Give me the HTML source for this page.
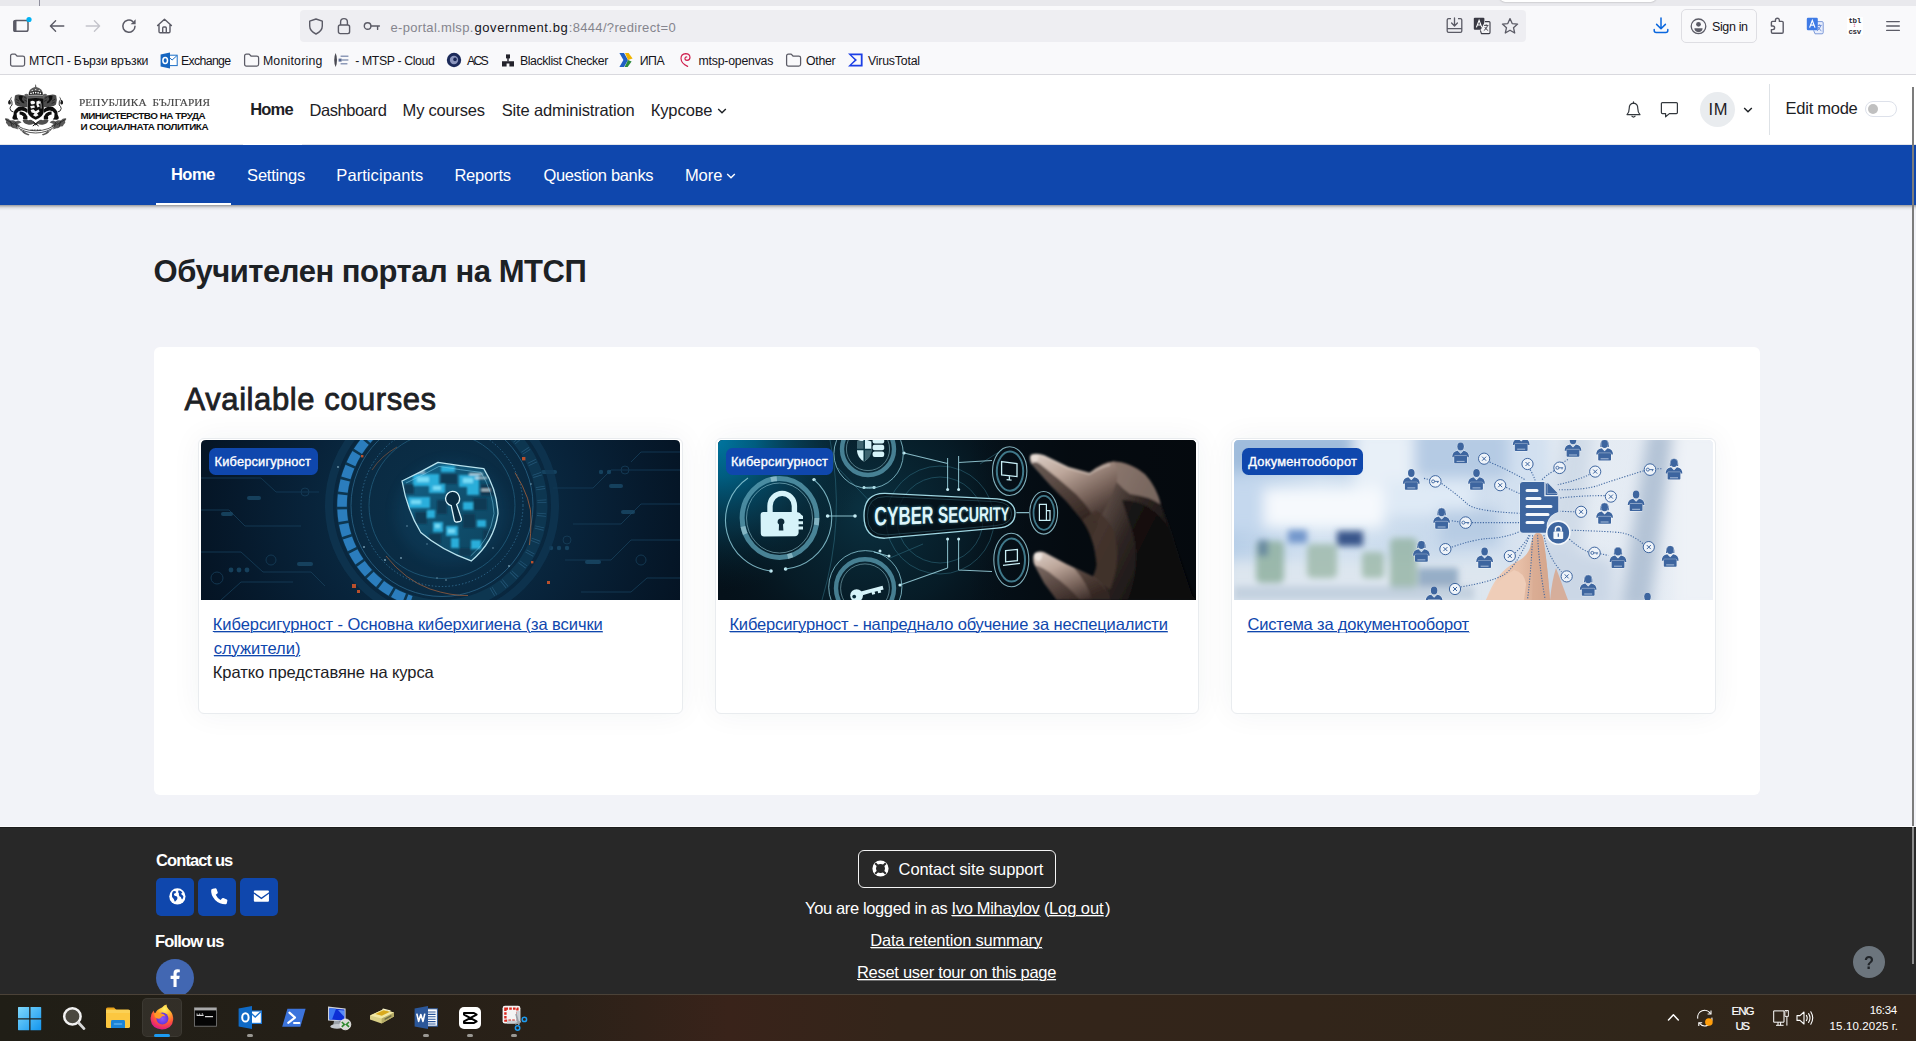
<!DOCTYPE html>
<html lang="bg"><head><meta charset="utf-8"><title>Home | Обучителен портал на МТСП</title>
<style>
html,body{margin:0;padding:0}
body{width:1916px;height:1041px;overflow:hidden;position:relative;background:#f2f3f8;font-family:"Liberation Sans",sans-serif}
.t{position:absolute;white-space:pre;display:block}
.a{position:absolute;display:block}
svg{position:absolute;overflow:visible}
u{text-decoration:underline;text-decoration-thickness:1px;text-underline-offset:2px}

</style></head>
<body>

<!-- ===== Firefox chrome ===== -->
<div class="a" style="left:0;top:0;width:1916px;height:75px;background:#f9f9fb"></div>
<div class="a" style="left:0;top:0;width:1916px;height:6px;background:#e9e9ed"></div>
<div class="a" style="left:39px;top:0;width:1px;height:6px;background:#8f8f9d"></div>
<div class="a" style="left:1500px;top:-6px;width:156px;height:8px;background:#fff;border-radius:0 0 5px 5px;box-shadow:0 0 2px rgba(0,0,0,.35)"></div>
<div class="a" style="left:0;top:74px;width:1916px;height:1px;background:#d9d9de"></div>
<!-- urlbar -->
<div class="a" style="left:300px;top:10px;width:1226px;height:32px;background:#eeeef2;border-radius:4px"></div>
<!-- left toolbar icons -->
<svg style="left:12px;top:16px" width="20" height="18" viewBox="0 0 20 18"><rect x="2" y="4.6" width="14" height="10.6" rx="1.8" fill="none" stroke="#5b5b66" stroke-width="1.5"/><rect x="1.3" y="4" width="3.2" height="12" rx="1.5" fill="#5b5b66"/><circle cx="17" cy="3.5" r="2.6" fill="#00b3f4"/></svg>
<svg style="left:49px;top:19px" width="16" height="14" viewBox="0 0 16 14"><path d="M6.6 1.8 L1.4 7 L6.6 12.2 M1.8 7 H14.8" fill="none" stroke="#5b5b66" stroke-width="1.35" stroke-linecap="round" stroke-linejoin="round"/></svg>
<svg style="left:85px;top:19px" width="16" height="14" viewBox="0 0 16 14"><path d="M9.4 1.8 L14.6 7 L9.4 12.2 M14.2 7 H1.2" fill="none" stroke="#c4c4cb" stroke-width="1.35" stroke-linecap="round" stroke-linejoin="round"/></svg>
<svg style="left:121px;top:18px" width="16" height="16" viewBox="0 0 16 16"><path d="M14 8.2 A6.1 6.1 0 1 1 11.6 3.3" fill="none" stroke="#5b5b66" stroke-width="1.5" stroke-linecap="round"/><path d="M14.6 1.2 V6.2 H9.6 Z" fill="#5b5b66"/></svg>
<svg style="left:156px;top:18px" width="17" height="16" viewBox="0 0 17 16"><path d="M1.6 7.6 L8.5 1.2 L15.4 7.6 M3 6.6 V13.6 Q3 14.8 4.2 14.8 H12.8 Q14 14.8 14 13.6 V6.6 M6.7 14.6 V10 Q6.7 9 7.7 9 H9.3 Q10.3 9 10.3 10 V14.6" fill="none" stroke="#5b5b66" stroke-width="1.4" stroke-linecap="round" stroke-linejoin="round"/></svg>
<!-- urlbar icons -->
<svg style="left:308px;top:18px" width="16" height="17" viewBox="0 0 16 17"><path d="M8 1 L14.3 3.2 V8 Q14.3 13 8 16 Q1.7 13 1.7 8 V3.2 Z" fill="none" stroke="#5b5b66" stroke-width="1.4" stroke-linejoin="round"/></svg>
<svg style="left:337px;top:17px" width="14" height="18" viewBox="0 0 14 18"><rect x="1.4" y="8" width="11.2" height="8.6" rx="1.8" fill="none" stroke="#5b5b66" stroke-width="1.4"/><path d="M3.6 8 V5 A3.4 3.4 0 0 1 10.4 5 V8" fill="none" stroke="#5b5b66" stroke-width="1.4"/></svg>
<svg style="left:363px;top:21px" width="18" height="11" viewBox="0 0 18 11"><circle cx="4.6" cy="5" r="3.3" fill="none" stroke="#5b5b66" stroke-width="1.4"/><path d="M8 5 H16.4 M14.6 5 V8.4" fill="none" stroke="#5b5b66" stroke-width="1.4" stroke-linecap="round"/></svg>
<span id="t0" class="t" style="left:390.50px;top:19px;font:400 13.0px/17px 'Liberation Sans',sans-serif;color:#85858e;letter-spacing:0.313px;">e-portal.mlsp.</span>
<span id="t1" class="t" style="left:474.60px;top:19px;font:400 13.0px/17px 'Liberation Sans',sans-serif;color:#15141a;letter-spacing:0.526px;">government.bg</span>
<span id="t2" class="t" style="left:568.70px;top:19px;font:400 13.0px/17px 'Liberation Sans',sans-serif;color:#85858e;letter-spacing:0.337px;">:8444/?redirect=0</span>
<!-- urlbar right icons -->
<svg style="left:1446px;top:17px" width="17" height="17" viewBox="0 0 17 17"><path d="M5 1.6 H2.6 Q1.2 1.6 1.2 3 V14 Q1.2 15.4 2.6 15.4 H14.4 Q15.8 15.4 15.8 14 V3 Q15.8 1.6 14.4 1.6 H12 M1.4 11.6 H15.6" fill="none" stroke="#5b5b66" stroke-width="1.3"/><path d="M8.5 1 V8.6 M5.6 6 L8.5 9 L11.4 6" fill="none" stroke="#5b5b66" stroke-width="1.3" stroke-linecap="round" stroke-linejoin="round"/></svg>
<svg style="left:1473px;top:17px" width="18" height="18" viewBox="0 0 18 18"><rect x="0.8" y="0.8" width="10.6" height="12" rx="1" fill="#3a3a44"/><path d="M3.4 10.4 L6.1 3.2 L8.8 10.4 M4.4 8 H7.8" fill="none" stroke="#fff" stroke-width="1.1"/><path d="M12 4.6 H16 Q17 4.6 17 5.6 V15.6 Q17 16.6 16 16.6 H8.4 L7.4 13.4" fill="#f4f4f6" stroke="#3a3a44" stroke-width="1.1" stroke-linejoin="round"/><path d="M11 8.4 H15.4 M13.2 7.4 V8.4 M14.6 8.6 Q13.6 12 10.8 13.6 M11.8 10 Q13 12.6 15.2 13.6" fill="none" stroke="#3a3a44" stroke-width="0.9"/></svg>
<svg style="left:1501px;top:17px" width="18" height="18" viewBox="0 0 18 18"><path d="M9 1.6 L11.2 6.6 L16.6 7.1 L12.5 10.7 L13.7 16 L9 13.2 L4.3 16 L5.5 10.7 L1.4 7.1 L6.8 6.6 Z" fill="none" stroke="#5b5b66" stroke-width="1.3" stroke-linejoin="round"/></svg>
<!-- right of urlbar -->
<svg style="left:1653px;top:17px" width="16" height="17" viewBox="0 0 16 17"><path d="M8 1 V11.4 M3.6 7.4 L8 11.8 L12.4 7.4 M1.2 12.6 V13.6 Q1.2 15.6 3.2 15.6 H12.8 Q14.8 15.6 14.8 13.6 V12.6" fill="none" stroke="#0a67de" stroke-width="1.5" stroke-linecap="round" stroke-linejoin="round"/></svg>
<div class="a" style="left:1681px;top:9px;width:74px;height:32px;border:1px solid #dedee3;border-radius:5px;background:#f9f9fb"></div>
<svg style="left:1690px;top:18px" width="17" height="17" viewBox="0 0 17 17"><circle cx="8.5" cy="8.3" r="7.3" fill="none" stroke="#5b5b66" stroke-width="1.3"/><circle cx="8.5" cy="6.3" r="2.4" fill="#5b5b66"/><path d="M4.4 10.2 H12.6 Q12.6 13.6 8.5 14.2 Q4.4 13.6 4.4 10.2 Z" fill="#5b5b66"/></svg>
<span id="t3" class="t" style="left:1711.90px;top:18px;font:400 12.5px/18px 'Liberation Sans',sans-serif;color:#15141a;letter-spacing:-0.345px;">Sign in</span>
<svg style="left:1769px;top:17px" width="17" height="18" viewBox="0 0 17 18"><path d="M6.4 4.4 V3.4 Q6.4 1.3 8.4 1.3 Q10.4 1.3 10.4 3.4 V4.4 H13 Q14.2 4.4 14.2 5.6 V15 Q14.2 16.2 13 16.2 H3.6 Q2.4 16.2 2.4 15 V12.6 H3.8 Q5.6 12.6 5.6 10.8 Q5.6 9 3.8 9 H2.4 V5.6 Q2.4 4.4 3.6 4.4 Z" fill="none" stroke="#5b5b66" stroke-width="1.4" stroke-linejoin="round"/></svg>
<svg style="left:1806px;top:17px" width="18" height="18" viewBox="0 0 18 18"><path d="M9.6 4.6 H16 Q17.2 4.6 17.2 5.8 V15.6 Q17.2 16.8 16 16.8 H9 L7.6 13.4" fill="#e8eefc" stroke="#6f8fd4" stroke-width="0.9"/><rect x="0.8" y="0.8" width="11" height="12.4" rx="1.2" fill="#3f7be6"/><path d="M3.6 10.6 L6.3 3.4 L9 10.6 M4.6 8.2 H8" fill="none" stroke="#fff" stroke-width="1.2"/><path d="M11.4 8.4 H15.6 M13.4 7.4 V8.4 M14.8 8.6 Q13.8 12 11 13.8 M12 10 Q13.2 12.6 15.4 13.8" fill="none" stroke="#5a7fd0" stroke-width="0.9"/></svg>
<div class="a" style="left:1847px;top:17px;width:16px;height:18px;background:#fff"></div>
<span class="t" style="left:1848.5px;top:16.5px;font:700 7.5px/8px 'Liberation Mono',monospace;color:#2b2a33;letter-spacing:-0.4px">tbl</span>
<span class="t" style="left:1853px;top:22px;font:700 6px/7px 'Liberation Sans',sans-serif;color:#e22d6b">↕</span>
<span class="t" style="left:1848.5px;top:27.5px;font:700 7.5px/8px 'Liberation Mono',monospace;color:#2b2a33;letter-spacing:-0.4px">csv</span>
<svg style="left:1886px;top:20px" width="14" height="12" viewBox="0 0 14 12"><path d="M0.7 1.6 H13.3 M0.7 6 H13.3 M0.7 10.4 H13.3" stroke="#5b5b66" stroke-width="1.4" stroke-linecap="round"/></svg>


<svg style="left:9px;top:52.5px" width="17" height="15" viewBox="0 0 17 15"><path d="M1.6 3 Q1.6 1.1 3.4 1.1 H6.2 L8 3 H13.8 Q15.6 3 15.6 4.8 V11.2 Q15.6 13 13.8 13 H3.4 Q1.6 13 1.6 11.2 Z" fill="none" stroke="#5b5b66" stroke-width="1.25" stroke-linejoin="round"/></svg>
<span id="t4" class="t" style="left:29.10px;top:52px;font:400 12.3px/18px 'Liberation Sans',sans-serif;color:#15141a;letter-spacing:-0.242px;">МТСП - Бързи връзки</span>
<svg style="left:160px;top:51.7px" width="18" height="17" viewBox="0 0 18 17"><rect x="7" y="3.2" width="10.2" height="10.4" fill="#fff" stroke="#1b6ec6" stroke-width="1"/><path d="M7.4 3.8 L12.1 8 L16.8 3.8" fill="none" stroke="#1b6ec6" stroke-width="1"/><path d="M0.6 2.4 L10 0.6 V16.4 L0.6 14.6 Z" fill="#1565c0"/><ellipse cx="5.2" cy="8.5" rx="2.3" ry="3" fill="none" stroke="#fff" stroke-width="1.5"/></svg>
<span id="t5" class="t" style="left:180.90px;top:52px;font:400 12.3px/18px 'Liberation Sans',sans-serif;color:#15141a;letter-spacing:-0.636px;">Exchange</span>
<svg style="left:243px;top:52.5px" width="17" height="15" viewBox="0 0 17 15"><path d="M1.6 3 Q1.6 1.1 3.4 1.1 H6.2 L8 3 H13.8 Q15.6 3 15.6 4.8 V11.2 Q15.6 13 13.8 13 H3.4 Q1.6 13 1.6 11.2 Z" fill="none" stroke="#5b5b66" stroke-width="1.25" stroke-linejoin="round"/></svg>
<span id="t6" class="t" style="left:262.90px;top:52px;font:400 12.3px/18px 'Liberation Sans',sans-serif;color:#15141a;letter-spacing:0.225px;">Monitoring</span>
<svg style="left:333px;top:52px" width="17" height="16" viewBox="0 0 17 16"><path d="M2.6 1 Q4 4 4 8 Q4 12 2.6 15 Q1.2 12 1.2 8 Q1.2 4 2.6 1 Z" fill="#4a4a52"/><path d="M7.6 4.2 H15.4 M8.6 8 H15.4 M7.6 11.8 H14.4" stroke="#8d9ab8" stroke-width="1.5"/><rect x="5.6" y="6.6" width="3" height="3" fill="#5a6a92"/></svg>
<span id="t7" class="t" style="left:355.20px;top:52px;font:400 12.3px/18px 'Liberation Sans',sans-serif;color:#15141a;letter-spacing:-0.376px;">- MTSP - Cloud</span>
<svg style="left:446px;top:52px" width="16" height="16" viewBox="0 0 16 16"><circle cx="8" cy="8" r="7.2" fill="#1c2a5a"/><circle cx="8" cy="8" r="4.2" fill="#8c96bd"/><circle cx="9" cy="7.4" r="1.8" fill="#1c2a5a"/></svg>
<span id="t8" class="t" style="left:467.10px;top:52px;font:400 12.3px/18px 'Liberation Sans',sans-serif;color:#15141a;letter-spacing:-1.841px;">ACS</span>
<svg style="left:501px;top:54px" width="14" height="13" viewBox="0 0 14 13"><rect x="5" y="0.4" width="4" height="4" fill="#23222b"/><path d="M7 4 V7.4" stroke="#23222b" stroke-width="1.4"/><path d="M1 7.2 H13 V12.4 H8.4 V9.4 H5.6 V12.4 H1 Z" fill="#23222b"/></svg>
<span id="t9" class="t" style="left:519.90px;top:52px;font:400 12.3px/18px 'Liberation Sans',sans-serif;color:#15141a;letter-spacing:-0.369px;">Blacklist Checker</span>
<svg style="left:618px;top:52px" width="16" height="16" viewBox="0 0 16 16"><path d="M1.4 1 H6 L10 8 L6 15 H1.4 L5.4 8 Z" fill="#1f5fc4"/><path d="M7 1 H10.6 L14.6 6.4 L10 8 Z" fill="#f0b400"/><path d="M10 8 L13.6 9.6 L9.6 15 H6.6 Z" fill="#2c8a3c"/></svg>
<span id="t10" class="t" style="left:639.80px;top:52px;font:400 12.3px/18px 'Liberation Sans',sans-serif;color:#15141a;letter-spacing:-0.538px;">ИПА</span>
<svg style="left:678px;top:52px" width="15" height="16" viewBox="0 0 15 16"><path d="M9.6 14.4 Q3.2 11.6 3 6.6 Q3 2 7.6 1.6 Q11.6 1.6 12 5.2 Q12 8.2 9 8.4 Q6.8 8.2 7 6.2 Q7.4 4.8 8.8 5" fill="none" stroke="#d0214f" stroke-width="1.2" stroke-linecap="round"/></svg>
<span id="t11" class="t" style="left:698.60px;top:52px;font:400 12.3px/18px 'Liberation Sans',sans-serif;color:#15141a;letter-spacing:-0.226px;">mtsp-openvas</span>
<svg style="left:785px;top:52.5px" width="17" height="15" viewBox="0 0 17 15"><path d="M1.6 3 Q1.6 1.1 3.4 1.1 H6.2 L8 3 H13.8 Q15.6 3 15.6 4.8 V11.2 Q15.6 13 13.8 13 H3.4 Q1.6 13 1.6 11.2 Z" fill="none" stroke="#5b5b66" stroke-width="1.25" stroke-linejoin="round"/></svg>
<span id="t12" class="t" style="left:805.90px;top:52px;font:400 12.3px/18px 'Liberation Sans',sans-serif;color:#15141a;letter-spacing:-0.240px;">Other</span>
<svg style="left:847px;top:52px" width="17" height="16" viewBox="0 0 17 16"><path d="M1 1.4 H15.6 V14.6 H1 L7.6 8 Z M4.6 3.2 L10 8 L4.6 12.8 H13.8 V3.2 Z" fill="#1c3fe6" fill-rule="evenodd"/></svg>
<span id="t13" class="t" style="left:867.90px;top:52px;font:400 12.3px/18px 'Liberation Sans',sans-serif;color:#15141a;letter-spacing:-0.182px;">VirusTotal</span>


<!-- ===== Moodle page ===== -->
<div class="a" style="left:0;top:75px;width:1916px;height:70px;background:#fff"></div>
<div class="a" style="left:0;top:144px;width:1916px;height:1px;background:#e4e6ea"></div>
<div class="a" style="left:243px;top:144px;width:59px;height:1px;background:#fff"></div>
<div class="a" style="left:0;top:145px;width:1916px;height:60px;background:#0f47ad"></div>
<div class="a" style="left:0;top:205px;width:1916px;height:6px;background:linear-gradient(to bottom,rgba(0,0,0,.36) 0%,rgba(0,0,0,.27) 16%,rgba(0,0,0,.15) 33%,rgba(0,0,0,.08) 50%,rgba(0,0,0,.035) 67%,rgba(0,0,0,.012) 84%,rgba(0,0,0,0) 100%)"></div>
<div class="a" style="left:156px;top:203px;width:75px;height:2px;background:#fff"></div>


<svg style="left:2px;top:80px" width="70" height="60" viewBox="0 0 70 60">
 <defs><filter id="cb" x="-5%" y="-5%" width="110%" height="110%"><feGaussianBlur stdDeviation="0.32"/></filter></defs>
 <g filter="url(#cb)">
  <!-- crown -->
  <path d="M33.7 4 L34.2 5.8 L33.2 5.8 Z M33.2 5.6 H34.2 V7 H33.2 Z" fill="#444"/>
  <path d="M26.4 15.6 Q26 8.4 33.7 6.8 Q41.4 8.4 41 15.6 Z" fill="#5a5a5a"/>
  <path d="M27.2 12.2 Q33.7 10.2 40.2 12.2 L40.4 15 Q33.7 13.2 27 15 Z" fill="#1c1c1c"/>
  <g fill="#fff"><circle cx="29" cy="13.3" r="0.85"/><circle cx="31.3" cy="12.8" r="0.85"/><circle cx="33.7" cy="12.6" r="0.85"/><circle cx="36.1" cy="12.8" r="0.85"/><circle cx="38.4" cy="13.3" r="0.85"/><circle cx="30.2" cy="10.4" r="0.6"/><circle cx="33.7" cy="9.6" r="0.6"/><circle cx="37.2" cy="10.4" r="0.6"/></g>
  <path d="M22.4 14.6 Q24 13 26.4 14.4 L26.6 16 H40.8 L41 14.4 Q43.4 13 45 14.6 Q44.4 17.6 42 18.8 H25.4 Q23 17.6 22.4 14.6 Z" fill="#666"/>
  <path d="M26.4 15.8 H41 V17.4 H26.4 Z" fill="#555"/>
  <g>
  <path d="M13 15.4 Q16 13.6 19.6 15 Q23 14.8 25.2 17.4 L25.4 27.2 Q22 27.6 19.4 26.4 Q15.4 26.8 13.2 24.4 Q11.6 20 13 15.4 Z" fill="#4c4c4c"/>
  <path d="M16.6 16 Q19 15 21 16.4 Q19.4 18.4 20.6 20.6 Q22.6 21.6 22.4 23.6 Q19.6 23 18.6 21 Q16.4 19.6 16.6 16 Z" fill="#111"/>
  <path d="M14 19 L17 21 M14.4 22 L17.6 23.6 M21.6 16.6 L24.4 18.4 M22.4 20 L25 21.4" stroke="#222" stroke-width="0.9" fill="none"/>
  <path d="M19 26.4 Q23.6 26.6 25.4 29.6 L25.4 33 Q22.6 30.6 19.6 30.4 Q16 30.6 14.6 33.4 L15 37.4 L16.4 39.4 L12.4 39.8 Q10 39.4 10.4 37.4 L11.6 34.6 Q11.6 30.4 14.4 28.4 Q16 26.6 19 26.4 Z" fill="#0d0d0d"/>
  <path d="M17.6 31.6 Q21 31.4 23.4 33.6 L25.4 36.4 L25.4 39.4 L21.4 39.6 Q20.4 37.6 21.4 36.4 Q19.6 34.4 17.6 34.4 Z" fill="#0d0d0d"/>
  <path d="M11.6 32 Q8.4 31.6 8 28.6 Q8.2 26.4 10 25 Q10.6 21.4 8.6 19.4" fill="none" stroke="#1a1a1a" stroke-width="0.9"/>
  <path d="M7.2 20 Q5.6 21.6 6.2 23.6 Q7 25 8.2 24.4 Q9.4 22.4 8.2 20.4 Q7.8 19.6 7.2 20 Z" fill="#1a1a1a"/>
  <path d="M8.8 19.4 Q8.2 17.6 9.8 17.2" fill="none" stroke="#333" stroke-width="0.7"/>
 </g><g transform="translate(67.2 0) scale(-1 1)">
  <path d="M13 15.4 Q16 13.6 19.6 15 Q23 14.8 25.2 17.4 L25.4 27.2 Q22 27.6 19.4 26.4 Q15.4 26.8 13.2 24.4 Q11.6 20 13 15.4 Z" fill="#4c4c4c"/>
  <path d="M16.6 16 Q19 15 21 16.4 Q19.4 18.4 20.6 20.6 Q22.6 21.6 22.4 23.6 Q19.6 23 18.6 21 Q16.4 19.6 16.6 16 Z" fill="#111"/>
  <path d="M14 19 L17 21 M14.4 22 L17.6 23.6 M21.6 16.6 L24.4 18.4 M22.4 20 L25 21.4" stroke="#222" stroke-width="0.9" fill="none"/>
  <path d="M19 26.4 Q23.6 26.6 25.4 29.6 L25.4 33 Q22.6 30.6 19.6 30.4 Q16 30.6 14.6 33.4 L15 37.4 L16.4 39.4 L12.4 39.8 Q10 39.4 10.4 37.4 L11.6 34.6 Q11.6 30.4 14.4 28.4 Q16 26.6 19 26.4 Z" fill="#0d0d0d"/>
  <path d="M17.6 31.6 Q21 31.4 23.4 33.6 L25.4 36.4 L25.4 39.4 L21.4 39.6 Q20.4 37.6 21.4 36.4 Q19.6 34.4 17.6 34.4 Z" fill="#0d0d0d"/>
  <path d="M11.6 32 Q8.4 31.6 8 28.6 Q8.2 26.4 10 25 Q10.6 21.4 8.6 19.4" fill="none" stroke="#1a1a1a" stroke-width="0.9"/>
  <path d="M7.2 20 Q5.6 21.6 6.2 23.6 Q7 25 8.2 24.4 Q9.4 22.4 8.2 20.4 Q7.8 19.6 7.2 20 Z" fill="#1a1a1a"/>
  <path d="M8.8 19.4 Q8.2 17.6 9.8 17.2" fill="none" stroke="#333" stroke-width="0.7"/>
 </g>
  <!-- shield -->
  <path d="M25.6 18.6 Q33.7 17.4 41.8 18.6 L41.8 31 Q41.6 36.6 33.7 39.8 Q25.8 36.6 25.6 31 Z" fill="#0c0c0c"/>
  <path d="M28.4 21.4 Q30.4 20 32.4 21.2 Q33.8 22.6 32.4 24 L29.6 24.4 Q28.2 23.4 28.4 21.4 Z M28.2 26 L32.2 25.4 L33 27.4 L29 28.4 Z M28.6 30 L31.4 29.2 L33.6 31.2 L36.6 29.4 L37.6 31.4 L35 33.6 L36.6 35.2 L33.6 36.8 L31 35.2 L32.6 33.2 L29.6 32.6 Z M34.4 21.4 L37.4 20.6 L38.4 23.4 L36.4 24 L37.8 26.6 L35.4 27.4 L34.4 24.4 Z" fill="#f4f4f4"/>
  <path d="M38.6 21 Q40 24 39.6 28.6 L38.6 28.4 Q39 24.4 37.8 21.4 Z" fill="#bbb"/>
  <!-- base -->
  <path d="M3 38.4 Q6.4 38 8.4 40.6 Q11.4 39.6 13.6 41.6 L16 40.4 Q18.4 40.8 19.6 42.6 L15.6 44 L18.4 46.2 L14.6 46.6 L16.4 49.4 L12.6 48.2 Q10.4 48.6 8.8 46.6 Q6 46.8 5.4 44.4 Q3 42.6 4.2 41 Q2.6 39.8 3 38.4 Z" fill="#5a5a5a"/>
  <path d="M64.2 38.4 Q60.8 38 58.8 40.6 Q55.8 39.6 53.6 41.6 L51.2 40.4 Q48.800000000000004 40.8 47.6 42.6 L51.6 44 L48.8 46.2 L52.6 46.6 L50.8 49.4 L54.6 48.2 Q56.8 48.6 58.4 46.6 Q61.2 46.8 61.8 44.4 Q64.2 42.6 63 41 Q64.6 39.8 64.2 38.4 Z" fill="#5a5a5a"/>
  <path d="M4 39.4 L12 44.6 M8.4 40.8 L10 46.4 M13.6 41.8 L14.6 46.4 M63.2 39.4 L55.2 44.6 M58.8 40.8 L57.2 46.4 M53.6 41.8 L52.6 46.4" stroke="#222" stroke-width="0.8" fill="none"/>
  <path d="M20.6 40.2 Q23.6 38.6 26.4 40.2 Q29 39.2 31 41 L33.7 43.4 L36.4 41 Q38.4 39.2 41 40.2 Q43.8 38.6 46.6 40.2 Q45.6 43.6 42.4 44.2 Q38.4 45.6 36 43.8 L33.7 45.6 L31.4 43.8 Q29 45.6 25 44.2 Q21.6 43.6 20.6 40.2 Z" fill="#505050"/>
  <path d="M31 41.6 L36.6 46 M36.4 41.6 L30.8 46" stroke="#111" stroke-width="1"/>
  <path d="M11.6 42.8 Q20 50.6 33.7 50.8 Q47.4 50.6 55.6 42.8" fill="none" stroke="#2a2a2a" stroke-width="0.8"/>
  <path d="M14 46.2 Q22 52.8 33.7 53 Q45.4 52.8 53.2 46.2" fill="none" stroke="#2a2a2a" stroke-width="0.8"/>
  <path d="M28.6 50.2 H38.8" stroke="#333" stroke-width="1.3" stroke-dasharray="1 0.6"/>
  <path d="M21.6 50.8 Q24 53.6 27.6 54.4 L26.4 55.6 Q22.4 54.6 20.4 52.2 Z M45.8 50.8 Q43.4 53.6 39.8 54.4 L41 55.6 Q45 54.6 47 52.2 Z" fill="#5a5a5a"/>
  <path d="M18 49.6 L22 52.6 M49.4 49.6 L45.4 52.6" stroke="#444" stroke-width="0.8"/>
 </g>
</svg>


<span id="t14" class="t" style="left:79.30px;top:94px;font:400 10.9px/16px 'Liberation Serif',serif;color:#444;letter-spacing:0.116px;transform:scaleX(1.03);transform-origin:0 0;-webkit-text-stroke:0.15px #444;">РЕПУБЛИКА  БЪЛГАРИЯ</span>
<span id="t15" class="t" style="left:80.40px;top:108px;font:700 9.9px/15px 'Liberation Sans',sans-serif;color:#111;letter-spacing:-0.485px;">МИНИСТЕРСТВО НА ТРУДА</span>
<span id="t16" class="t" style="left:80.40px;top:119px;font:700 9.9px/15px 'Liberation Sans',sans-serif;color:#111;letter-spacing:-0.433px;">И СОЦИАЛНАТА ПОЛИТИКА</span>
<span id="t17" class="t" style="left:250.20px;top:98px;font:700 16.5px/22px 'Liberation Sans',sans-serif;color:#1d2125;letter-spacing:-0.789px;">Home</span>
<span id="t18" class="t" style="left:309.50px;top:99px;font:400 16.5px/22px 'Liberation Sans',sans-serif;color:#1d2125;letter-spacing:-0.418px;">Dashboard</span>
<span id="t19" class="t" style="left:402.60px;top:99px;font:400 16.5px/22px 'Liberation Sans',sans-serif;color:#1d2125;letter-spacing:-0.211px;">My courses</span>
<span id="t20" class="t" style="left:501.70px;top:99px;font:400 16.5px/22px 'Liberation Sans',sans-serif;color:#1d2125;letter-spacing:-0.147px;">Site administration</span>
<span id="t21" class="t" style="left:650.80px;top:99px;font:400 16.5px/22px 'Liberation Sans',sans-serif;color:#1d2125;letter-spacing:-0.091px;">Курсове</span>
<svg style="left:716.6px;top:107.6px" width="10" height="6" viewBox="0 0 10 6"><path d="M1.2 1 L5 4.8 L8.8 1" fill="none" stroke="#1d2125" stroke-width="1.4"/></svg>
<!-- blue nav -->
<span id="t22" class="t" style="left:170.90px;top:163px;font:700 16.5px/22px 'Liberation Sans',sans-serif;color:#fff;letter-spacing:-0.489px;">Home</span>
<span id="t23" class="t" style="left:247.10px;top:164px;font:400 16.5px/22px 'Liberation Sans',sans-serif;color:#fff;letter-spacing:-0.210px;">Settings</span>
<span id="t24" class="t" style="left:336.30px;top:164px;font:400 16.5px/22px 'Liberation Sans',sans-serif;color:#fff;letter-spacing:0.077px;">Participants</span>
<span id="t25" class="t" style="left:454.40px;top:164px;font:400 16.5px/22px 'Liberation Sans',sans-serif;color:#fff;letter-spacing:-0.187px;">Reports</span>
<span id="t26" class="t" style="left:543.40px;top:164px;font:400 16.5px/22px 'Liberation Sans',sans-serif;color:#fff;letter-spacing:-0.346px;">Question banks</span>
<span id="t27" class="t" style="left:684.90px;top:164px;font:400 16.5px/22px 'Liberation Sans',sans-serif;color:#fff;letter-spacing:-0.039px;">More</span>
<svg style="left:726.4px;top:173px" width="10" height="6" viewBox="0 0 10 6"><path d="M1.2 1 L5 4.8 L8.8 1" fill="none" stroke="#fff" stroke-width="1.4"/></svg>
<!-- right of navbar -->
<svg style="left:1625px;top:101px" width="17" height="18" viewBox="0 0 17 18"><path d="M8.5 2.2 Q12.8 2.6 12.8 7.4 Q12.8 11.6 15 13.6 H2 Q4.2 11.6 4.2 7.4 Q4.2 2.6 8.5 2.2 Z" fill="none" stroke="#33383d" stroke-width="1.2" stroke-linejoin="round"/><path d="M8.5 0.8 V2.2 M6.9 15.2 Q8.5 17 10.1 15.2" fill="none" stroke="#33383d" stroke-width="1.2" stroke-linecap="round"/></svg>
<svg style="left:1660px;top:101px" width="19" height="18" viewBox="0 0 19 18"><path d="M2.4 1.6 H16.4 Q17.4 1.6 17.4 2.6 V11.6 Q17.4 12.6 16.4 12.6 H9.4 L5.6 15.8 V12.6 H2.4 Q1.4 12.6 1.4 11.6 V2.6 Q1.4 1.6 2.4 1.6 Z" fill="none" stroke="#33383d" stroke-width="1.2" stroke-linejoin="round"/></svg>
<div class="a" style="left:1699.7px;top:91.9px;width:35.2px;height:35.2px;border-radius:50%;background:#e9ecef"></div>
<span id="t28" class="t" style="left:1708.60px;top:98px;font:400 16.5px/22px 'Liberation Sans',sans-serif;color:#1d2125;letter-spacing:0.616px;">IM</span>
<svg style="left:1742.8px;top:106.8px" width="10" height="6" viewBox="0 0 10 6"><path d="M1.2 1 L5 4.8 L8.8 1" fill="none" stroke="#1d2125" stroke-width="1.4"/></svg>
<div class="a" style="left:1769px;top:84px;width:1px;height:51px;background:#dee2e6"></div>
<span id="t29" class="t" style="left:1785.60px;top:97px;font:400 16.5px/22px 'Liberation Sans',sans-serif;color:#1d2125;letter-spacing:-0.264px;">Edit mode</span>
<div class="a" style="left:1865px;top:101px;width:30px;height:14px;border:1px solid #dde1ea;border-radius:8px;background:#fff"></div>
<div class="a" style="left:1867.6px;top:103.6px;width:10.8px;height:10.8px;border-radius:50%;background:#c0c0c0"></div>
<!-- page heading -->
<span id="t30" class="t" style="left:153.50px;top:254px;font:700 31px/35px 'Liberation Sans',sans-serif;color:#1d2125;letter-spacing:-0.466px;">Обучителен портал на МТСП</span>
<!-- scrollbar -->
<div class="a" style="left:1912px;top:87px;width:2px;height:740px;background:#7c7c7c"></div>


<div class="a" style="left:154px;top:347px;width:1606px;height:448px;background:#fff;border-radius:6px"></div>
<span id="t31" class="t" style="left:184.60px;top:382px;font:400 31px/35px 'Liberation Sans',sans-serif;color:#1d2125;letter-spacing:0.569px;-webkit-text-stroke:0.8px #1d2125;">Available courses</span>

<div class="a" style="left:198px;top:438px;width:483px;height:274px;border:1px solid #e9ecef;border-radius:6px;background:#fff;box-shadow:0 0 30px rgba(40,50,70,.055)"></div>
<div class="a" style="left:715px;top:438px;width:482px;height:274px;border:1px solid #e9ecef;border-radius:6px;background:#fff;box-shadow:0 0 30px rgba(40,50,70,.055)"></div>
<div class="a" style="left:1231px;top:438px;width:483px;height:274px;border:1px solid #e9ecef;border-radius:6px;background:#fff;box-shadow:0 0 30px rgba(40,50,70,.055)"></div>
<svg style="left:201px;top:440px" width="479" height="160" viewBox="0 0 479 160"><defs><clipPath id="cp1"><path d="M0 160 V5 Q0 0 5 0 H474 Q479 0 479 5 V160 Z"/></clipPath></defs><g clip-path="url(#cp1)">
<defs>
 <radialGradient id="g1bg" cx="241" cy="66" r="270" gradientUnits="userSpaceOnUse"><stop offset="0" stop-color="#0b3049"/><stop offset="0.3" stop-color="#0a2b43"/><stop offset="0.5" stop-color="#08233a"/><stop offset="0.75" stop-color="#061a2d"/><stop offset="1" stop-color="#041221"/></radialGradient>
 <linearGradient id="g1sh" x1="0" y1="0" x2="1" y2="1"><stop offset="0" stop-color="#14648a"/><stop offset="0.5" stop-color="#10506f"/><stop offset="1" stop-color="#0d435e"/></linearGradient>
 <filter id="b1" x="-20%" y="-20%" width="140%" height="140%"><feGaussianBlur stdDeviation="0.9"/></filter>
 <filter id="b3" x="-30%" y="-30%" width="160%" height="160%"><feGaussianBlur stdDeviation="6"/></filter>
 <clipPath id="shc"><path d="M201 41 Q220 32 237 22.4 Q260 26 282.8 28.7 Q296 50 297 73.6 Q293 102 270.2 120.9 Q240 110 219.8 92.5 Q206 70 201 41 Z"/></clipPath>
</defs>
<rect width="479" height="160" fill="url(#g1bg)"/>
<!-- circuit traces -->
<g fill="none" stroke="#173f5a" stroke-width="1" opacity="0.8">
 <path d="M0 38 H60 L75 52 H118 M0 70 H28 L44 86 H100 M0 112 H40 L62 132 H110 L124 146 M20 160 L40 142 H92 M8 22 H50"/>
 <path d="M479 30 H410 L392 48 H352 M479 64 H440 L420 84 H372 M479 100 H430 L410 120 H364 M479 138 H446 L430 152 H380 M479 12 H440 L430 22"/>
 <circle cx="104" cy="52" r="4"/><circle cx="70" cy="120" r="5"/><circle cx="16" cy="138" r="6"/><circle cx="424" cy="30" r="4"/><circle cx="366" cy="100" r="4"/><circle cx="440" cy="120" r="5"/>
</g>
<g fill="#1a4a68" opacity="0.8"><rect x="46" y="56" width="14" height="4" rx="2"/><rect x="96" y="122" width="16" height="4" rx="2"/><rect x="20" y="72" width="12" height="4" rx="2"/><rect x="340" y="30" width="16" height="4" rx="2"/><rect x="408" y="44" width="14" height="4" rx="2"/><rect x="384" y="120" width="16" height="4" rx="2"/><rect x="420" y="70" width="14" height="4" rx="2"/><circle cx="30" cy="130" r="2.4"/><circle cx="38" cy="130" r="2.4"/><circle cx="46" cy="130" r="2.4"/><circle cx="400" cy="32" r="2.2"/><circle cx="408" cy="32" r="2.2"/><circle cx="350" cy="108" r="2.2"/><circle cx="358" cy="108" r="2.2"/><circle cx="366" cy="108" r="2.2"/></g>
<!-- rings -->
<g fill="none">
 <circle cx="241" cy="65.5" r="113" stroke="#0f3854" stroke-width="8" opacity="0.7"/>
 <circle cx="241" cy="65.5" r="100" stroke="#0e3854" stroke-width="11" opacity="0.85"/>
 <path d="M307.9 -8.8 A100 100 0 0 1 291.0 152.1" stroke="#2a5f82" stroke-width="9" stroke-dasharray="0.8 10.2 0.8 1.6" opacity="0.75"/>
 <path d="M174.1 -8.8 A100 100 0 0 0 210.1 160.6" stroke="#2b7dbd" stroke-width="9.6" stroke-dasharray="12 2.6"/>
 <circle cx="241" cy="65.5" r="91" stroke="#2a6488" stroke-width="0.9" opacity="0.9"/>
 <circle cx="241" cy="65.5" r="81" stroke="#3b7ea6" stroke-width="0.8" stroke-dasharray="1.4 2" opacity="0.9"/>
 <circle cx="241" cy="65.5" r="73" stroke="#1f5676" stroke-width="1" opacity="0.9"/>
 <path d="M314 32.7 Q331 60 330 80 Q330 94 328.5 105" stroke="#a8623c" stroke-width="1" opacity="0.8"/>
 <path d="M185 116 Q204 140 229 149 Q250 156 267 155.5" stroke="#a8623c" stroke-width="1" opacity="0.7"/>
 <path d="M171 30 Q180 16 196 7" stroke="#a8623c" stroke-width="0.9" opacity="0.6"/>
</g>
<g fill="#b9502c"><rect x="151" y="144" width="4" height="4"/><rect x="156" y="150" width="3" height="3"/><rect x="321" y="17" width="3.4" height="3.4"/><rect x="346" y="141" width="3" height="3"/><rect x="330" y="121" width="2.4" height="2.4"/><rect x="160" y="15" width="2.4" height="2.4"/></g>
<g fill="#9fc8dc" opacity="0.7"><circle cx="200" cy="118" r="0.9"/><circle cx="206" cy="86" r="0.8"/><circle cx="226" cy="104" r="0.7"/><circle cx="245" cy="140" r="0.8"/><circle cx="292" cy="108" r="0.8"/><circle cx="308" cy="126" r="0.9"/><circle cx="137" cy="27" r="0.9"/><circle cx="163" cy="107" r="1"/><circle cx="330" cy="44" r="0.8"/><circle cx="236" cy="138" r="0.7"/><circle cx="184" cy="120" r="1.1"/></g>
<!-- glow + shield -->
<ellipse cx="250" cy="72" rx="56" ry="52" fill="#12618a" opacity="0.16" filter="url(#b3)"/>
<path d="M201 41 Q220 32 237 22.4 Q260 26 282.8 28.7 Q296 50 297 73.6 Q293 102 270.2 120.9 Q240 110 219.8 92.5 Q206 70 201 41 Z" fill="url(#g1sh)"/>
<g clip-path="url(#shc)" filter="url(#b1)">
 <g fill="#2fb9e6" opacity="0.9"><rect x="212" y="34" width="26" height="12"/><rect x="228" y="44" width="16" height="9"/><rect x="207" y="57" width="22" height="11"/><rect x="258" y="35" width="20" height="12"/><rect x="266" y="47" width="12" height="8"/><rect x="232" y="82" width="10" height="10"/><rect x="245" y="86" width="12" height="10"/><rect x="276" y="80" width="9" height="7"/><rect x="270" y="100" width="10" height="9"/><rect x="250" y="98" width="8" height="10"/><rect x="240" y="26" width="14" height="6"/><rect x="226" y="70" width="8" height="8"/><rect x="262" y="62" width="10" height="8"/></g>
 <g fill="#8eeaff" opacity="0.75"><rect x="216" y="37" width="12" height="5"/><rect x="232" y="46" width="8" height="4"/><rect x="262" y="38" width="10" height="5"/><rect x="210" y="60" width="10" height="4"/><rect x="247" y="89" width="7" height="4"/><rect x="234" y="84" width="5" height="4"/></g>
 <g fill="#0a3852" opacity="0.9"><rect x="240" y="34" width="16" height="10"/><rect x="203" y="44" width="10" height="10"/><rect x="236" y="60" width="10" height="14"/><rect x="280" y="44" width="14" height="12"/><rect x="272" y="58" width="14" height="12"/><rect x="214" y="72" width="12" height="12"/><rect x="262" y="74" width="12" height="14"/><rect x="258" y="108" width="12" height="8"/><rect x="282" y="90" width="10" height="10"/><rect x="228" y="94" width="12" height="10"/></g>
 <g fill="#d9e6ea" opacity="0.85"><rect x="268" y="33" width="14" height="2.2"/><rect x="274" y="37" width="12" height="2"/><rect x="280" y="49" width="9" height="2"/><rect x="214" y="31" width="10" height="2"/></g>
</g>
<path d="M201 41 Q220 32 237 22.4 Q260 26 282.8 28.7 Q296 50 297 73.6 Q293 102 270.2 120.9 Q240 110 219.8 92.5 Q206 70 201 41 Z" fill="none" stroke="#c2ebf6" stroke-width="1.3" opacity="0.95"/>
<path d="M205 43 Q222 35 238 26.4 Q260 30 280 32.4 Q292 52 293 73.6 Q289 100 269.6 116" fill="none" stroke="#7fd3ee" stroke-width="0.7" opacity="0.7"/>
<!-- keyhole -->
<path d="M251.3 51.4 A7.2 7.2 0 0 1 255.6 64.4 L260.2 78.2 Q261 81.2 258.4 81.6 L256 82 Q253.6 82.4 253.2 79.6 L250.2 65.6 A7.2 7.2 0 0 1 251.3 51.4 Z" fill="#0a2c42" stroke="#dff6fc" stroke-width="1.3"/>
</g></svg>
<svg style="left:718px;top:440px" width="478" height="160" viewBox="0 0 478 160"><defs><clipPath id="cp2"><path d="M0 160 V5 Q0 0 5 0 H473 Q478 0 478 5 V160 Z"/></clipPath></defs><g clip-path="url(#cp2)">
<defs>
 <radialGradient id="g2tl" cx="0" cy="0" r="150" gradientUnits="userSpaceOnUse"><stop offset="0" stop-color="#00759f"/><stop offset="0.25" stop-color="#006388" stop-opacity="0.92"/><stop offset="0.6" stop-color="#07425a" stop-opacity="0.6"/><stop offset="1" stop-color="#06202c" stop-opacity="0"/></radialGradient>
 <radialGradient id="g2gl" cx="150" cy="70" r="170" gradientUnits="userSpaceOnUse"><stop offset="0" stop-color="#0c3a4c" stop-opacity="0.8"/><stop offset="0.6" stop-color="#082633" stop-opacity="0.5"/><stop offset="1" stop-color="#06141c" stop-opacity="0"/></radialGradient>
 <linearGradient id="g2fing" x1="0" y1="0" x2="0.7" y2="1"><stop offset="0" stop-color="#ddd0c8"/><stop offset="0.35" stop-color="#bda79b"/><stop offset="0.7" stop-color="#7a655c"/><stop offset="1" stop-color="#3a2c28"/></linearGradient>
 <linearGradient id="g2hand" x1="0" y1="0" x2="1" y2="0.5"><stop offset="0" stop-color="#a08b81"/><stop offset="0.3" stop-color="#6f5c54"/><stop offset="0.6" stop-color="#2e2522"/><stop offset="1" stop-color="#0a0a0c"/></linearGradient>
 <filter id="b2a" x="-20%" y="-20%" width="140%" height="140%"><feGaussianBlur stdDeviation="0.6"/></filter>
 <linearGradient id="g2dk" x1="0" y1="0" x2="1" y2="0"><stop offset="0" stop-color="#05080c" stop-opacity="0"/><stop offset="0.45" stop-color="#05080c" stop-opacity="0.7"/><stop offset="1" stop-color="#05080c" stop-opacity="0.85"/></linearGradient>
 <filter id="b2h" x="-20%" y="-20%" width="140%" height="140%"><feGaussianBlur stdDeviation="1.1"/></filter>
 <filter id="b2c" x="-20%" y="-20%" width="140%" height="140%"><feGaussianBlur stdDeviation="1.8"/></filter>
 <filter id="b2d" x="-20%" y="-20%" width="140%" height="140%"><feGaussianBlur stdDeviation="3"/></filter>
</defs>
<rect width="478" height="160" fill="#05111a"/>
<rect width="478" height="160" fill="url(#g2gl)"/>
<rect width="478" height="160" fill="url(#g2tl)"/>
<rect x="250" width="228" height="160" fill="url(#g2dk)"/>
<!-- faint geometry -->
<g fill="none" stroke="#3f8a9f" stroke-width="0.8" opacity="0.5">
 <circle cx="222" cy="80" r="54"/><circle cx="222" cy="80" r="43"/><path d="M112 0 Q128 80 104 160 M120 28 L160 70 M172 118 L205 104 M262 24 L284 10"/>
</g>
<g fill="none" stroke="#9fd6e2" stroke-width="1.05" opacity="0.85">
 <path d="M109.6 76 H137 M229.6 18 V49 M240.6 16 V49 M229.6 99 V128 M240.6 99 V130 M240.6 22.6 L274 20.6 M240.6 130 L274 131.6 M186 13 L229.6 23.6 M182 145 L229.6 128 M158 47 L146 47.6 M298.4 72.6 H311 M156 112 L170 116"/>
</g>
<g fill="#c4ebf3"><circle cx="109.6" cy="76" r="1.8"/><circle cx="137" cy="76" r="1.8"/><circle cx="229.6" cy="49.5" r="1.5"/><circle cx="240.6" cy="49.5" r="1.5"/><circle cx="229.6" cy="99" r="1.5"/><circle cx="240.6" cy="99" r="1.5"/><circle cx="186" cy="13" r="1.6"/><circle cx="182" cy="145" r="1.6"/><circle cx="53" cy="131" r="1.8"/><circle cx="67.6" cy="129" r="1.8"/><circle cx="96" cy="39.6" r="1.7"/><circle cx="146" cy="47.6" r="1.5"/><circle cx="156" cy="47.6" r="1.5"/><circle cx="162" cy="111" r="1.5"/><circle cx="171" cy="116" r="1.5"/></g>
<!-- big lock ring -->
<g fill="none">
 <path d="M53 131 A51 51 0 0 1 30 38" stroke="#8cc8d6" stroke-width="1.1" opacity="0.85"/>
 <path d="M96 39.6 A51 51 0 0 1 67.6 129" stroke="#8cc8d6" stroke-width="1.1" opacity="0.85"/>
 <ellipse cx="61.5" cy="78" rx="37.4" ry="39.4" stroke="#5c9fb4" stroke-width="5" opacity="0.78"/>
 <ellipse cx="61.5" cy="78" rx="37.4" ry="39.4" stroke="#b5dde6" stroke-width="5" opacity="0.55" stroke-dasharray="7 40 5 52 8 60 6 64"/>
 <ellipse cx="61.5" cy="78" rx="33" ry="35" stroke="#a9dbe6" stroke-width="0.8" opacity="0.65"/>
</g>
<g filter="url(#b2a)">
 <path d="M52 73 V66 A12.2 12.6 0 0 1 76.4 66 V73" fill="none" stroke="#d6f3f9" stroke-width="5.4"/>
 <path d="M45.4 72 H78 Q82 72 83 74.6 L85 76 V79 H80.6 V81.2 H85 V84.2 H80.6 V86.4 H85 V89.4 H80.6 V93 Q80 96 77 96.2 L46 96.6 Q43 96.6 42.8 93.6 L42.6 75 Q42.6 72 45.4 72 Z" fill="#d6f3f9"/>
 <path d="M63 78.4 A3.4 3.4 0 0 1 65 84.6 L65.4 90.4 H60.8 L61 84.6 A3.4 3.4 0 0 1 63 78.4 Z" fill="#082a38"/>
</g>
<!-- top circle -->
<g fill="none"><circle cx="150.6" cy="13.7" r="34.7" stroke="#8cc8d6" stroke-width="1" opacity="0.8"/><circle cx="150" cy="9" r="26" stroke="#5c9fb4" stroke-width="4.4" opacity="0.75"/><circle cx="150" cy="9" r="21.6" stroke="#a9dbe6" stroke-width="0.8" opacity="0.6"/></g>
<g filter="url(#b2a)" fill="#d6f3f9"><path d="M139 1 L146.4 -1 L153.4 1.6 V11 Q153 17.6 146 21.6 Q139.6 18 139 11 Z"/><rect x="154.6" y="-2" width="11.6" height="5.4" rx="2"/><rect x="154.6" y="4.8" width="11.6" height="5.4" rx="2"/><rect x="154.6" y="11.6" width="11.6" height="5.4" rx="2"/></g>
<path d="M146.2 -1 V21 M139 9.6 H153.4" stroke="#0a3442" stroke-width="1.5"/><path d="M139 1 H146.2 V9.6 H139 Z M146.2 9.6 H153.4 V14 Q151 19 146.2 21 Z" fill="#0a3442" opacity="0.75"/>
<!-- bottom circle -->
<g fill="none"><circle cx="147.3" cy="147.2" r="36.6" stroke="#8cc8d6" stroke-width="1" opacity="0.8"/><circle cx="147" cy="148.3" r="29" stroke="#5c9fb4" stroke-width="4.4" opacity="0.75"/><circle cx="147" cy="148.3" r="24.4" stroke="#a9dbe6" stroke-width="0.8" opacity="0.6"/></g>
<g filter="url(#b2a)" fill="#d6f3f9"><circle cx="138.6" cy="155.6" r="6.4"/><path d="M143 151.6 L164.6 145.8 L165.6 149.4 L162.6 150.2 L163.2 152.4 L160.2 153.2 L159.6 151 L156.6 151.8 L157.2 154 L154.2 154.8 L153.6 152.6 L144.6 155.2 Z"/></g>
<circle cx="136.2" cy="156.6" r="1.9" fill="#082a38"/>
<!-- pill (perspective) -->
<path d="M167 53.4 L279 58.8 Q297 60.4 297 73.4 Q297 86.6 279 88.2 L167 98.2 Q146 98.6 146 75.8 Q146 53 167 53.4 Z" fill="#040d14" fill-opacity="0.72" stroke="#9fd6e2" stroke-width="1.35"/>
<path d="M168 56.6 L278 61.6 Q293.6 63 293.6 73.6 Q293.6 84.2 278 85.6 L168 95 Q149.4 95.4 149.4 75.8 Q149.4 56.2 168 56.6 Z" fill="none" stroke="#5fa3b4" stroke-width="0.5" opacity="0.6"/>
<g transform="translate(156.3 85.6) rotate(-2.25) skewX(-2)">
<text x="0" y="0" font-family="'Liberation Sans',sans-serif" font-weight="700" textLength="135" lengthAdjust="spacingAndGlyphs" fill="#4fb8d0" opacity="0.6" filter="url(#b2c)"><tspan font-size="26.5">C</tspan><tspan font-size="25.9">Y</tspan><tspan font-size="25.3">B</tspan><tspan font-size="24.8">E</tspan><tspan font-size="24.2">R</tspan><tspan font-size="23.6">&#160;</tspan><tspan font-size="23.0">S</tspan><tspan font-size="22.5">E</tspan><tspan font-size="21.9">C</tspan><tspan font-size="21.3">U</tspan><tspan font-size="20.7">R</tspan><tspan font-size="20.2">I</tspan><tspan font-size="19.6">T</tspan><tspan font-size="19.0">Y</tspan></text>
<text x="0" y="0" font-family="'Liberation Sans',sans-serif" font-weight="700" textLength="135" lengthAdjust="spacingAndGlyphs" fill="#def6fb"><tspan font-size="26.5">C</tspan><tspan font-size="25.9">Y</tspan><tspan font-size="25.3">B</tspan><tspan font-size="24.8">E</tspan><tspan font-size="24.2">R</tspan><tspan font-size="23.6">&#160;</tspan><tspan font-size="23.0">S</tspan><tspan font-size="22.5">E</tspan><tspan font-size="21.9">C</tspan><tspan font-size="21.3">U</tspan><tspan font-size="20.7">R</tspan><tspan font-size="20.2">I</tspan><tspan font-size="19.6">T</tspan><tspan font-size="19.0">Y</tspan></text>
</g>
<!-- right ellipses -->
<g fill="none" stroke="#9fd6e2">
 <ellipse cx="291.7" cy="31.1" rx="17.2" ry="24.4" stroke-width="1.1" opacity="0.8"/><ellipse cx="292" cy="31.1" rx="13.2" ry="19.6" stroke-width="2" stroke="#4f93a8" opacity="0.8"/>
 <ellipse cx="325.7" cy="72.8" rx="13.9" ry="21.3" stroke-width="1.1" opacity="0.8"/><ellipse cx="325.9" cy="72.8" rx="10.4" ry="17" stroke-width="1.8" stroke="#4f93a8" opacity="0.8"/>
 <ellipse cx="293.3" cy="120" rx="17.5" ry="26.8" stroke-width="1.1" opacity="0.8"/><ellipse cx="293.6" cy="120" rx="13.4" ry="21.6" stroke-width="2" stroke="#4f93a8" opacity="0.8"/>
 <path d="M283.6 21.6 L299 23.6 V36.6 L283.6 35 Z M288.6 39.6 L293.6 40.2 M291.4 36 V40" stroke-width="1.3" stroke="#c8eef5"/>
 <path d="M321.4 64.4 H328.4 V80.4 H321.4 Z M328.4 70.6 H332 V80.4 H328.4" stroke-width="1.2" stroke="#c8eef5"/>
 <path d="M287.6 110.6 L299.4 109.4 V120.6 L287.6 121.8 Z M285 125.4 L302 123.4" stroke-width="1.3" stroke="#c8eef5"/>
</g>
<!-- hand -->
<g filter="url(#b2h)">
 <!-- dark mass: back of hand / wrist -->
 <path d="M371.9 32.7 Q384 22 395.5 21.6 Q404 21.6 411.3 24.8 Q420 28 427 34.2 Q436 44 441.2 57.9 L442.8 64.2 Q452 88 458.5 108.3 L474.3 155.5 L478 160 H338.8 L375 136.6 Q380 124 378.2 120.9 Q377 108 373.5 98.8 Q370 88 364 79.9 Z" fill="url(#g2hand)"/>
 <path d="M395.5 21.6 Q410 22 427 34.2 Q438 46 442.8 64.2 Q430 56 412 54 Q398 44 390 30 Z" fill="#9a857a" opacity="0.7"/>
 <path d="M404 60 Q430 60 448 84 L478 160 H410 Q424 120 414 90 Z" fill="#060608" opacity="0.6"/>
 <!-- index finger -->
 <path d="M312 18.5 Q311.6 15.4 313.6 14.5 Q319 12.6 326.2 15.3 L350.6 27.1 L371.9 32.7 Q384 24 395.5 21.6 Q402 30 398 44 Q392 62 378 84 L364 79.9 L348.3 61 L332.5 45.3 L313.6 24 Q312 21.6 312 18.5 Z" fill="url(#g2fing)"/>
 <path d="M313.6 24 L332.5 45.3 L348.3 61 L364 79.9 Q370 88 373.5 98.8 L380 84 Q372 68 358 54 Q340 38 322 24 Q316 20 313.6 24 Z" fill="#241815" opacity="0.62"/>
 <path d="M314 15.6 Q320 13.6 326.2 16.4 L350 28 L371 34 Q382 27 392 24.6" fill="none" stroke="#e6dbd3" stroke-width="1.6" opacity="0.5"/>
 <!-- side of hand between finger and thumb -->
 <path d="M364 79.9 Q370 88 373.5 98.8 Q377 108 378.2 120.9 Q380 128 375 136.6 L392 150 Q404 120 396 92 Q390 78 378 70 Z" fill="#43322c" opacity="0.85"/>
 <!-- thumb -->
 <path d="M315.2 117.7 Q315.6 113.6 318.3 112.2 Q322 110.8 326.2 112.2 L348.3 124 L375 136.6 Q384 142 390 152 L392 160 H338.8 L326.2 142.9 L316.8 125.6 Q315 121.6 315.2 117.7 Z" fill="url(#g2fing)"/>
 <path d="M316.8 125.6 L326.2 142.9 L338.8 160 H362 Q350 146 336 136 Q324 126 316.8 125.6 Z" fill="#241815" opacity="0.5"/>
 <path d="M356 128 L375 136.6 Q386 144 392 160 H374 Q370 144 356 128 Z" fill="#2e211d" opacity="0.6"/>
 <path d="M313 16 Q316 14 320.4 15.4 Q321 20 317 22.4 Q313 21 313 16 Z" fill="#ece3dd" opacity="0.7"/>
 <path d="M316 114 Q319.6 111.6 324 113.6 Q325 118.6 320.6 121.4 Q316.4 119.6 316 114 Z" fill="#f1e9e4" opacity="0.85"/>
</g>
</g></svg>
<svg style="left:1234px;top:440px" width="479" height="160" viewBox="0 0 479 160"><defs><clipPath id="cp3"><path d="M0 160 V5 Q0 0 5 0 H474 Q479 0 479 5 V160 Z"/></clipPath></defs><g clip-path="url(#cp3)">
<defs>
 <linearGradient id="g3bg" x1="0" y1="0" x2="1" y2="0"><stop offset="0" stop-color="#b8cfe8"/><stop offset="0.18" stop-color="#d3e2f1"/><stop offset="0.4" stop-color="#c9daec"/><stop offset="0.56" stop-color="#d3e0ef"/><stop offset="0.66" stop-color="#e4ebf3"/><stop offset="1" stop-color="#e6ecf4"/></linearGradient>
 <filter id="b3a" x="-30%" y="-30%" width="160%" height="160%"><feGaussianBlur stdDeviation="7"/></filter>
 <filter id="b3b" x="-30%" y="-30%" width="160%" height="160%"><feGaussianBlur stdDeviation="3.2"/></filter>
 <filter id="b3c" x="-30%" y="-30%" width="160%" height="160%"><feGaussianBlur stdDeviation="0.6"/></filter>
 <linearGradient id="g3f" x1="0" y1="0" x2="1" y2="0"><stop offset="0" stop-color="#f1d3c0"/><stop offset="0.55" stop-color="#e6bda5"/><stop offset="1" stop-color="#cf9f86"/></linearGradient>
</defs>
<rect width="479" height="160" fill="url(#g3bg)"/>
<g filter="url(#b3a)">
 <rect x="-10" y="-10" width="150" height="40" fill="#9fbcdc"/>
 <rect x="120" y="-10" width="70" height="60" fill="#e8f0f8"/>
 <rect x="180" y="-10" width="100" height="48" fill="#b5cbe4"/>
 <rect x="20" y="48" width="130" height="40" fill="#f6f9fd"/>
 <rect x="150" y="40" width="90" height="36" fill="#dfeaf6"/>
 <rect x="-10" y="40" width="40" height="50" fill="#c5d8ee"/>
 <rect x="-10" y="120" width="280" height="50" fill="#dde6ef"/>
 <rect x="205" y="70" width="60" height="36" fill="#b7cce4"/>
 <rect x="275" y="-10" width="40" height="100" fill="#d2e0f0"/>
 <rect x="440" y="-10" width="50" height="50" fill="#b4cae4"/>
 <path d="M414 -10 L440 -10 L416 170 L386 170 Z" fill="#b3c3d6"/>
 <path d="M330 -10 L360 -10 L340 170 L300 170 Z" fill="#d0dbe8"/>
 <rect x="440" y="-10" width="50" height="180" fill="#eef2f7"/>
 <path d="M300 100 L380 120 L380 170 L290 170 Z" fill="#cbd7e6"/>
</g>
<g filter="url(#b3b)">
 <rect x="22" y="101" width="28" height="42" rx="5" fill="#8fb0a0" opacity="0.85"/>
 <rect x="73" y="104" width="30" height="34" rx="5" fill="#9bb8a8" opacity="0.8"/>
 <rect x="156" y="98" width="27" height="52" rx="5" fill="#93b3a2" opacity="0.8"/>
 <rect x="128" y="112" width="22" height="26" rx="4" fill="#9ab8a6" opacity="0.8"/>
 <rect x="103" y="91" width="26" height="15" fill="#37558a"/>
 <rect x="54" y="90" width="19" height="13" fill="#7397cc"/>
 <rect x="24" y="100" width="10" height="16" fill="#5e7f9e" opacity="0.8"/>
 <rect x="184" y="128" width="40" height="20" fill="#5d7fa6" opacity="0.55"/>
 <rect x="0" y="146" width="240" height="14" fill="#b9c9d9" opacity="0.7"/>
</g>
<!-- finger -->
<g filter="url(#b3c)">
 <path d="M252 160 Q262 132 282 122 Q292 118 296 108 Q298 96 302 93 Q307 92 309 97 Q313 120 316 160 Z" fill="url(#g3f)"/>
 <path d="M296 108 Q300 130 298 160 H316 Q313 120 309 97 Q305 100 296 108 Z" fill="#d9aa91" opacity="0.6"/>
 <path d="M252 160 Q262 140 280 130 Q290 132 292 144 L290 160 Z" fill="#efcdb8"/>
 <path d="M316 160 Q318 140 322 128 L334 160 Z" fill="#d9a488" opacity="0.8"/>
</g>
<g fill="none" stroke="#3d659f" stroke-width="1.1" stroke-dasharray="1.2 1.5" opacity="0.95"><path d="M255.6 22.0 Q275.8 30.8 291.0 39.7"/><path d="M296.1 29.6 Q299.8 35.9 301.1 40.4"/><path d="M333.9 19.5 L321.3 27.0"/><path d="M320.1 30.8 Q311.2 35.9 307.4 40.4"/><path d="M272.1 47.3 Q282.2 52.3 287.2 54.1"/><path d="M190.0 38.4 L196.3 39.7"/><path d="M207.6 43.5 Q225.3 56.1 232.9 63.7 Q240.5 71.3 286.0 73.3"/><path d="M217.8 80.8 L225.3 81.9"/><path d="M238.0 82.6 L286.0 82.6"/><path d="M355.4 34.6 Q341.5 40.9 323.8 44.7"/><path d="M427.4 28.8 L422.3 28.8"/><path d="M409.7 30.8 Q376.9 40.9 364.3 45.4 Q351.6 49.8 325.1 49.8"/><path d="M370.6 55.6 Q346.6 55.6 325.1 58.1"/><path d="M340.3 71.8 L326.4 71.3"/><path d="M217.8 107.1 Q240.5 99.0 255.6 98.4 Q270.8 97.8 286.0 91.5"/><path d="M280.9 112.9 Q291.0 104.1 294.8 95.2"/><path d="M226.6 147.0 Q255.6 142.0 268.3 135.7 Q280.9 129.3 296.1 95.2"/><path d="M309.9 95.2 Q313.7 116.7 327.6 131.9"/><path d="M337.7 90.2 Q376.9 91.5 387.0 92.7 Q397.1 94.0 409.7 104.1"/><path d="M335.2 99.0 Q346.6 109.1 354.7 112.2"/><path d="M366.3 113.7 L374.4 115.5"/><path d="M303.6 95.2 Q304.9 124.3 311.2 159.7"/><path d="M298.6 95.2 Q297.3 129.3 293.5 159.7"/></g><g fill="#3d659f" stroke="#fff" stroke-width="0.9" stroke-opacity="0.75" paint-order="stroke"><ellipse cx="226.6" cy="6.6" rx="3.3" ry="4"/><path d="M218.2 17.2 Q218.2 11.6 223.6 10.8 L226.6 13.8 L229.6 10.8 Q235.0 11.6 235.0 17.2 Z"/><rect x="220.2" y="15.8" width="12.8" height="7.4" rx="0.8"/></g><path d="M222.6 21.4 H230.6" stroke="#c7d6ea" stroke-width="0.8"/><g fill="#3d659f" stroke="#fff" stroke-width="0.9" stroke-opacity="0.75" paint-order="stroke"><ellipse cx="287.2" cy="-5.6" rx="3.3" ry="4"/><path d="M278.8 5.0 Q278.8 -0.6 284.2 -1.4 L287.2 1.6 L290.2 -1.4 Q295.6 -0.6 295.6 5.0 Z"/><rect x="280.8" y="3.6" width="12.8" height="7.4" rx="0.8"/></g><path d="M283.2 9.2 H291.2" stroke="#c7d6ea" stroke-width="0.8"/><g fill="#3d659f" stroke="#fff" stroke-width="0.9" stroke-opacity="0.75" paint-order="stroke"><ellipse cx="339.0" cy="0.2" rx="3.3" ry="4"/><path d="M330.6 10.8 Q330.6 5.2 336.0 4.4 L339.0 7.4 L342.0 4.4 Q347.4 5.2 347.4 10.8 Z"/><rect x="332.6" y="9.4" width="12.8" height="7.4" rx="0.8"/></g><path d="M335.0 15.0 H343.0" stroke="#c7d6ea" stroke-width="0.8"/><g fill="#3d659f" stroke="#fff" stroke-width="0.9" stroke-opacity="0.75" paint-order="stroke"><path d="M366.4 7.0 Q366.0 -0.4 370.6 -0.4 Q375.2 -0.4 374.8 7.0 Z"/><ellipse cx="370.6" cy="4.0" rx="3.3" ry="4"/><path d="M362.2 14.6 Q362.2 9.0 367.6 8.2 L370.6 11.2 L373.6 8.2 Q379.0 9.0 379.0 14.6 Z"/><rect x="364.2" y="13.2" width="12.8" height="7.4" rx="0.8"/></g><path d="M366.6 18.8 H374.6" stroke="#c7d6ea" stroke-width="0.8"/><g fill="#3d659f" stroke="#fff" stroke-width="0.9" stroke-opacity="0.75" paint-order="stroke"><path d="M435.8 26.0 Q435.4 18.6 440.0 18.6 Q444.6 18.6 444.2 26.0 Z"/><ellipse cx="440.0" cy="23.0" rx="3.3" ry="4"/><path d="M431.6 33.6 Q431.6 28.0 437.0 27.2 L440.0 30.2 L443.0 27.2 Q448.4 28.0 448.4 33.6 Z"/><rect x="433.6" y="32.2" width="12.8" height="7.4" rx="0.8"/></g><path d="M436.0 37.8 H444.0" stroke="#c7d6ea" stroke-width="0.8"/><g fill="#3d659f" stroke="#fff" stroke-width="0.9" stroke-opacity="0.75" paint-order="stroke"><ellipse cx="177.3" cy="33.1" rx="3.3" ry="4"/><path d="M168.9 43.7 Q168.9 38.1 174.3 37.3 L177.3 40.3 L180.3 37.3 Q185.7 38.1 185.7 43.7 Z"/><rect x="170.9" y="42.3" width="12.8" height="7.4" rx="0.8"/></g><path d="M173.3 47.9 H181.3" stroke="#c7d6ea" stroke-width="0.8"/><g fill="#3d659f" stroke="#fff" stroke-width="0.9" stroke-opacity="0.75" paint-order="stroke"><ellipse cx="242.5" cy="33.1" rx="3.3" ry="4"/><path d="M234.1 43.7 Q234.1 38.1 239.5 37.3 L242.5 40.3 L245.5 37.3 Q250.9 38.1 250.9 43.7 Z"/><rect x="236.1" y="42.3" width="12.8" height="7.4" rx="0.8"/></g><path d="M238.5 47.9 H246.5" stroke="#c7d6ea" stroke-width="0.8"/><g fill="#3d659f" stroke="#fff" stroke-width="0.9" stroke-opacity="0.75" paint-order="stroke"><ellipse cx="402.1" cy="54.5" rx="3.3" ry="4"/><path d="M393.7 65.1 Q393.7 59.5 399.1 58.7 L402.1 61.7 L405.1 58.7 Q410.5 59.5 410.5 65.1 Z"/><rect x="395.7" y="63.7" width="12.8" height="7.4" rx="0.8"/></g><path d="M398.1 69.3 H406.1" stroke="#c7d6ea" stroke-width="0.8"/><g fill="#3d659f" stroke="#fff" stroke-width="0.9" stroke-opacity="0.75" paint-order="stroke"><path d="M366.4 70.2 Q366.0 62.8 370.6 62.8 Q375.2 62.8 374.8 70.2 Z"/><ellipse cx="370.6" cy="67.2" rx="3.3" ry="4"/><path d="M362.2 77.8 Q362.2 72.2 367.6 71.4 L370.6 74.4 L373.6 71.4 Q379.0 72.2 379.0 77.8 Z"/><rect x="364.2" y="76.4" width="12.8" height="7.4" rx="0.8"/></g><path d="M366.6 82.0 H374.6" stroke="#c7d6ea" stroke-width="0.8"/><g fill="#3d659f" stroke="#fff" stroke-width="0.9" stroke-opacity="0.75" paint-order="stroke"><path d="M203.4 75.2 Q203.0 67.8 207.6 67.8 Q212.2 67.8 211.8 75.2 Z"/><ellipse cx="207.6" cy="72.2" rx="3.3" ry="4"/><path d="M199.2 82.8 Q199.2 77.2 204.6 76.4 L207.6 79.4 L210.6 76.4 Q216.0 77.2 216.0 82.8 Z"/><rect x="201.2" y="81.4" width="12.8" height="7.4" rx="0.8"/></g><path d="M203.6 87.0 H211.6" stroke="#c7d6ea" stroke-width="0.8"/><g fill="#3d659f" stroke="#fff" stroke-width="0.9" stroke-opacity="0.75" paint-order="stroke"><path d="M183.2 108.1 Q182.8 100.7 187.4 100.7 Q192.0 100.7 191.6 108.1 Z"/><ellipse cx="187.4" cy="105.1" rx="3.3" ry="4"/><path d="M179.0 115.7 Q179.0 110.1 184.4 109.3 L187.4 112.3 L190.4 109.3 Q195.8 110.1 195.8 115.7 Z"/><rect x="181.0" y="114.3" width="12.8" height="7.4" rx="0.8"/></g><path d="M183.4 119.9 H191.4" stroke="#c7d6ea" stroke-width="0.8"/><g fill="#3d659f" stroke="#fff" stroke-width="0.9" stroke-opacity="0.75" paint-order="stroke"><ellipse cx="250.6" cy="111.4" rx="3.3" ry="4"/><path d="M242.2 122.0 Q242.2 116.4 247.6 115.6 L250.6 118.6 L253.6 115.6 Q259.0 116.4 259.0 122.0 Z"/><rect x="244.2" y="120.6" width="12.8" height="7.4" rx="0.8"/></g><path d="M246.6 126.2 H254.6" stroke="#c7d6ea" stroke-width="0.8"/><g fill="#3d659f" stroke="#fff" stroke-width="0.9" stroke-opacity="0.75" paint-order="stroke"><path d="M379.8 114.4 Q379.4 107.0 384.0 107.0 Q388.6 107.0 388.2 114.4 Z"/><ellipse cx="384.0" cy="111.4" rx="3.3" ry="4"/><path d="M375.6 122.0 Q375.6 116.4 381.0 115.6 L384.0 118.6 L387.0 115.6 Q392.4 116.4 392.4 122.0 Z"/><rect x="377.6" y="120.6" width="12.8" height="7.4" rx="0.8"/></g><path d="M380.0 126.2 H388.0" stroke="#c7d6ea" stroke-width="0.8"/><g fill="#3d659f" stroke="#fff" stroke-width="0.9" stroke-opacity="0.75" paint-order="stroke"><path d="M432.0 113.1 Q431.6 105.7 436.2 105.7 Q440.8 105.7 440.4 113.1 Z"/><ellipse cx="436.2" cy="110.1" rx="3.3" ry="4"/><path d="M427.8 120.7 Q427.8 115.1 433.2 114.3 L436.2 117.3 L439.2 114.3 Q444.6 115.1 444.6 120.7 Z"/><rect x="429.8" y="119.3" width="12.8" height="7.4" rx="0.8"/></g><path d="M432.2 124.9 H440.2" stroke="#c7d6ea" stroke-width="0.8"/><g fill="#3d659f" stroke="#fff" stroke-width="0.9" stroke-opacity="0.75" paint-order="stroke"><path d="M350.0 142.2 Q349.6 134.8 354.2 134.8 Q358.8 134.8 358.4 142.2 Z"/><ellipse cx="354.2" cy="139.2" rx="3.3" ry="4"/><path d="M345.8 149.8 Q345.8 144.2 351.2 143.4 L354.2 146.4 L357.2 143.4 Q362.6 144.2 362.6 149.8 Z"/><rect x="347.8" y="148.4" width="12.8" height="7.4" rx="0.8"/></g><path d="M350.2 154.0 H358.2" stroke="#c7d6ea" stroke-width="0.8"/><g fill="#3d659f" stroke="#fff" stroke-width="0.9" stroke-opacity="0.75" paint-order="stroke"><ellipse cx="200.1" cy="150.5" rx="3.3" ry="4"/><path d="M191.7 161.1 Q191.7 155.5 197.1 154.7 L200.1 157.7 L203.1 154.7 Q208.5 155.5 208.5 161.1 Z"/><rect x="193.7" y="159.7" width="12.8" height="7.4" rx="0.8"/></g><path d="M196.1 165.3 H204.1" stroke="#c7d6ea" stroke-width="0.8"/><g fill="#3d659f" stroke="#fff" stroke-width="0.9" stroke-opacity="0.75" paint-order="stroke"><ellipse cx="413.5" cy="156.8" rx="3.3" ry="4"/><path d="M405.1 167.4 Q405.1 161.8 410.5 161.0 L413.5 164.0 L416.5 161.0 Q421.9 161.8 421.9 167.4 Z"/><rect x="407.1" y="166.0" width="12.8" height="7.4" rx="0.8"/></g><path d="M409.5 171.6 H417.5" stroke="#c7d6ea" stroke-width="0.8"/><circle cx="250.1" cy="18.7" r="5.6" fill="#eef3f9" stroke="#3d659f" stroke-width="1"/><path d="M248.1 16.7 L252.1 20.7 M252.1 16.7 L248.1 20.7" stroke="#3d659f" stroke-width="1"/><circle cx="293.5" cy="24.0" r="5.6" fill="#eef3f9" stroke="#3d659f" stroke-width="1"/><path d="M291.5 22.0 L295.5 26.0 M295.5 22.0 L291.5 26.0" stroke="#3d659f" stroke-width="1"/><circle cx="361.2" cy="31.6" r="5.6" fill="#eef3f9" stroke="#3d659f" stroke-width="1"/><path d="M359.2 29.6 L363.2 33.6 M363.2 29.6 L359.2 33.6" stroke="#3d659f" stroke-width="1"/><circle cx="266.2" cy="45.2" r="5.6" fill="#eef3f9" stroke="#3d659f" stroke-width="1"/><path d="M264.2 43.2 L268.2 47.2 M268.2 43.2 L264.2 47.2" stroke="#3d659f" stroke-width="1"/><circle cx="376.9" cy="56.6" r="5.6" fill="#eef3f9" stroke="#3d659f" stroke-width="1"/><path d="M374.9 54.6 L378.9 58.6 M378.9 54.6 L374.9 58.6" stroke="#3d659f" stroke-width="1"/><circle cx="347.1" cy="71.8" r="5.6" fill="#eef3f9" stroke="#3d659f" stroke-width="1"/><path d="M345.1 69.8 L349.1 73.8 M349.1 69.8 L345.1 73.8" stroke="#3d659f" stroke-width="1"/><circle cx="211.4" cy="109.1" r="5.6" fill="#eef3f9" stroke="#3d659f" stroke-width="1"/><path d="M209.4 107.1 L213.4 111.1 M213.4 107.1 L209.4 111.1" stroke="#3d659f" stroke-width="1"/><circle cx="275.8" cy="116.0" r="5.6" fill="#eef3f9" stroke="#3d659f" stroke-width="1"/><path d="M273.8 114.0 L277.8 118.0 M277.8 114.0 L273.8 118.0" stroke="#3d659f" stroke-width="1"/><circle cx="414.8" cy="107.1" r="5.6" fill="#eef3f9" stroke="#3d659f" stroke-width="1"/><path d="M412.8 105.1 L416.8 109.1 M416.8 105.1 L412.8 109.1" stroke="#3d659f" stroke-width="1"/><circle cx="332.7" cy="136.4" r="5.6" fill="#eef3f9" stroke="#3d659f" stroke-width="1"/><path d="M330.7 134.4 L334.7 138.4 M334.7 134.4 L330.7 138.4" stroke="#3d659f" stroke-width="1"/><circle cx="221.0" cy="149.0" r="5.6" fill="#eef3f9" stroke="#3d659f" stroke-width="1"/><path d="M219.0 147.0 L223.0 151.0 M223.0 147.0 L219.0 151.0" stroke="#3d659f" stroke-width="1"/><circle cx="201.3" cy="41.4" r="5.8" fill="#eef3f9" stroke="#3d659f" stroke-width="1"/><circle cx="199.1" cy="41.4" r="1.5" fill="none" stroke="#3d659f" stroke-width="0.9"/><path d="M200.6 41.4 H204.9 M203.7 41.4 V43.0" stroke="#3d659f" stroke-width="0.9"/><circle cx="325.6" cy="27.8" r="5.8" fill="#eef3f9" stroke="#3d659f" stroke-width="1"/><circle cx="323.4" cy="27.8" r="1.5" fill="none" stroke="#3d659f" stroke-width="0.9"/><path d="M324.9 27.8 H329.2 M328.0 27.8 V29.4" stroke="#3d659f" stroke-width="0.9"/><circle cx="416.0" cy="29.6" r="5.8" fill="#eef3f9" stroke="#3d659f" stroke-width="1"/><circle cx="413.8" cy="29.6" r="1.5" fill="none" stroke="#3d659f" stroke-width="0.9"/><path d="M415.3 29.6 H419.6 M418.4 29.6 V31.2" stroke="#3d659f" stroke-width="0.9"/><circle cx="231.6" cy="82.6" r="5.8" fill="#eef3f9" stroke="#3d659f" stroke-width="1"/><circle cx="229.4" cy="82.6" r="1.5" fill="none" stroke="#3d659f" stroke-width="0.9"/><path d="M230.9 82.6 H235.2 M234.0 82.6 V84.2" stroke="#3d659f" stroke-width="0.9"/><circle cx="360.5" cy="112.9" r="5.8" fill="#eef3f9" stroke="#3d659f" stroke-width="1"/><circle cx="358.3" cy="112.9" r="1.5" fill="none" stroke="#3d659f" stroke-width="0.9"/><path d="M359.8 112.9 H364.1 M362.9 112.9 V114.5" stroke="#3d659f" stroke-width="0.9"/>
<!-- document -->
<g stroke="#fff" stroke-opacity="0.7" stroke-width="1" paint-order="stroke">
<path d="M289 42 H311 L324.3 55.6 V72 Q316 74 313 83 Q312 88 314 92.7 H289 Q286 92.7 286 89.7 V45 Q286 42 289 42 Z" fill="#3d659f"/>
<path d="M313.4 42.6 L324 53.4 H313.4 Z" fill="#3d659f"/>
</g>
<path d="M311 42 V55.6 H324.3" fill="none" stroke="#e8eef6" stroke-width="1.3"/>
<g stroke="#f4f7fb" stroke-width="3" stroke-linecap="round"><path d="M293 50.5 H303 M293 58.6 H306 M293 66.6 H317 M293 74.6 H314 M293 82.6 H309"/></g>
<circle cx="324.3" cy="92.7" r="11.6" fill="#3d659f" stroke="#f4f7fb" stroke-width="1.6"/>
<rect x="319.4" y="91.4" width="9.8" height="7.6" rx="1" fill="#f4f7fb"/><path d="M321.4 91.4 V89.4 A2.9 2.9 0 0 1 327.2 89.4 V91.4" fill="none" stroke="#f4f7fb" stroke-width="1.5"/><rect x="323.7" y="93.4" width="1.2" height="3.4" fill="#3d659f"/>
</g></svg>
<div class="a" style="left:209.1px;top:448px;width:108.9px;height:26.8px;background:#0f47ad;border-radius:6.5px"></div><span id="t32" class="t" style="left:214.60px;top:453px;font:400 12.8px/17px 'Liberation Sans',sans-serif;color:#fff;letter-spacing:0.178px;-webkit-text-stroke:0.35px #fff;">Киберсигурност</span>
<div class="a" style="left:726.2px;top:448px;width:107.3px;height:26.8px;background:#0f47ad;border-radius:6.5px"></div><span id="t33" class="t" style="left:730.90px;top:453px;font:400 12.8px/17px 'Liberation Sans',sans-serif;color:#fff;letter-spacing:0.231px;-webkit-text-stroke:0.35px #fff;">Киберсигурност</span>
<div class="a" style="left:1241.7px;top:448px;width:121.3px;height:26.8px;background:#0f47ad;border-radius:6.5px"></div><span id="t34" class="t" style="left:1248.30px;top:453px;font:400 12.8px/17px 'Liberation Sans',sans-serif;color:#fff;letter-spacing:0.246px;-webkit-text-stroke:0.35px #fff;">Документооборот</span>
<span id="t35" class="t" style="left:212.80px;top:613px;font:400 16.5px/22px 'Liberation Sans',sans-serif;color:#0f47ad;letter-spacing:-0.073px;text-decoration:underline;text-decoration-thickness:1.3px;text-underline-offset:1.2px;">Киберсигурност - Основна киберхигиена (за всички</span><div class="a" style="left:213.8px;top:632px;width:388.8px;height:1px;background:#0f47ad;opacity:.33"></div>
<span id="t36" class="t" style="left:213.80px;top:637px;font:400 16.5px/22px 'Liberation Sans',sans-serif;color:#0f47ad;letter-spacing:-0.035px;text-decoration:underline;text-decoration-thickness:1.3px;text-underline-offset:1.2px;">служители)</span><div class="a" style="left:213.8px;top:656px;width:86.1px;height:1px;background:#0f47ad;opacity:.33"></div>
<span id="t37" class="t" style="left:212.80px;top:661px;font:400 16.5px/22px 'Liberation Sans',sans-serif;color:#1d2125;letter-spacing:-0.078px;">Кратко представяне на курса</span>
<span id="t38" class="t" style="left:729.40px;top:613px;font:400 16.5px/22px 'Liberation Sans',sans-serif;color:#0f47ad;letter-spacing:-0.157px;text-decoration:underline;text-decoration-thickness:1.3px;text-underline-offset:1.2px;">Киберсигурност - напреднало обучение за неспециалисти</span><div class="a" style="left:730.4px;top:632px;width:437.3px;height:1px;background:#0f47ad;opacity:.33"></div>
<span id="t39" class="t" style="left:1247.40px;top:613px;font:400 16.5px/22px 'Liberation Sans',sans-serif;color:#0f47ad;letter-spacing:-0.176px;text-decoration:underline;text-decoration-thickness:1.3px;text-underline-offset:1.2px;">Система за документооборот</span><div class="a" style="left:1247.4px;top:632px;width:222.2px;height:1px;background:#0f47ad;opacity:.33"></div>

<!-- ===== footer ===== -->
<div class="a" style="left:0;top:826px;width:1916px;height:1px;background:#fbfbfd"></div>
<div class="a" style="left:0;top:827px;width:1916px;height:167px;background:#282828"></div>
<div class="a" style="left:0;top:827px;width:1916px;height:1px;background:#1c1c1c"></div>
<div class="a" style="left:1912px;top:827px;width:2px;height:137px;background:#8a8a8a"></div>
<span id="t40" class="t" style="left:156.00px;top:849px;font:700 16.5px/22px 'Liberation Sans',sans-serif;color:#fff;letter-spacing:-0.887px;">Contact us</span>
<div class="a" style="left:156px;top:878px;width:38px;height:38px;background:#0f47ad;border-radius:5px"></div>
<div class="a" style="left:198px;top:878px;width:38px;height:38px;background:#0f47ad;border-radius:5px"></div>
<div class="a" style="left:240px;top:878px;width:38px;height:38px;background:#0f47ad;border-radius:5px"></div>
<svg style="left:168.7px;top:887.6px" width="16.8" height="16.8" viewBox="0 0 17 17"><circle cx="8.5" cy="8.5" r="8.2" fill="#fff"/><path d="M4.2 3.2 Q6.4 2.6 7.4 4 Q6.6 5.6 5 5.8 Q4.6 7.6 6.4 8 Q8.6 8 8.6 10 Q8.4 11.6 7.2 12.6 Q6.4 14 5.6 13.4 Q5.2 11.4 4.2 10.4 Q2.6 9 3 6.4 Q3 4.4 4.2 3.2 Z M9.8 2.4 Q12.4 2.6 13.6 4.6 Q12 5 12.6 6.6 Q14 7 14.6 8.6 Q14.4 10.6 13.2 11.6 Q12.2 10.4 12 9 Q10.2 8.6 10 7 Q10.4 5.4 9.4 4.6 Q9 3.2 9.8 2.4 Z" fill="#0f47ad"/></svg>
<svg style="left:210.6px;top:887.8px" width="17" height="17" viewBox="0 0 17 17"><path d="M3.6 0.8 L6 0.4 Q6.6 0.4 6.9 1 L7.9 3.8 Q8.1 4.4 7.6 4.9 L6.2 6.1 Q7.4 8.9 10.4 10.7 L11.8 9.2 Q12.3 8.8 12.9 9 L15.9 10.2 Q16.5 10.5 16.4 11.2 L15.9 13.6 Q15.7 14.3 14.9 14.4 Q10 14.6 5.6 10.6 Q1.6 6.4 2.2 1.8 Q2.4 1 3.6 0.8 Z" fill="#fff" transform="translate(-2.3 -0.2) scale(1.14)"/></svg>
<svg style="left:252.7px;top:889.8px" width="16.8" height="12.6" viewBox="0 0 18 14"><path d="M1.8 0.6 H16.2 Q17.4 0.6 17.4 1.8 V2.4 L9 8.4 L0.6 2.4 V1.8 Q0.6 0.6 1.8 0.6 Z M0.6 4.2 L9 10.2 L17.4 4.2 V12 Q17.4 13.2 16.2 13.2 H1.8 Q0.6 13.2 0.6 12 Z" fill="#fff"/></svg>
<span id="t41" class="t" style="left:155.00px;top:930px;font:700 16.5px/22px 'Liberation Sans',sans-serif;color:#fff;letter-spacing:-0.838px;">Follow us</span>
<div class="a" style="left:156px;top:959px;width:38px;height:38px;background:#4267b2;border-radius:50%"></div>
<svg style="left:169.4px;top:968px" width="12" height="20" viewBox="0 0 12 20"><path d="M7.6 19 V11 H10.2 L10.7 7.8 H7.6 V5.8 Q7.6 4.3 9.2 4.3 H10.8 V1.5 Q9.6 1.3 8.4 1.3 Q4.5 1.3 4.5 5.4 V7.8 H1.6 V11 H4.5 V19 Z" fill="#fff"/></svg>
<!-- center column -->
<div class="a" style="left:858px;top:850px;width:196px;height:36px;border:1px solid #f4f4f4;border-radius:6px"></div>
<svg style="left:871.6px;top:860.4px" width="17" height="17" viewBox="0 0 17 17"><circle cx="8.5" cy="8.5" r="6.3" fill="none" stroke="#fff" stroke-width="3.6"/><circle cx="8.5" cy="8.5" r="3.2" fill="none" stroke="#282828" stroke-width="0"/><path d="M3.2 3.2 L5.8 5.8 M13.8 3.2 L11.2 5.8 M3.2 13.8 L5.8 11.2 M13.8 13.8 L11.2 11.2" stroke="#282828" stroke-width="2"/></svg>
<span id="t42" class="t" style="left:898.60px;top:858px;font:400 16.5px/22px 'Liberation Sans',sans-serif;color:#fff;letter-spacing:-0.103px;">Contact site support</span>
<span id="t43" class="t" style="left:805.10px;top:897px;font:400 16.5px/22px 'Liberation Sans',sans-serif;color:#fff;letter-spacing:-0.373px;">You are logged in as</span>
<span id="t44" class="t" style="left:1044.00px;top:897px;font:400 16.5px/22px 'Liberation Sans',sans-serif;color:#fff;">(</span>
<span id="t45" class="t" style="left:1105.00px;top:897px;font:400 16.5px/22px 'Liberation Sans',sans-serif;color:#fff;">)</span>

<span id="t46" class="t" style="left:951.40px;top:897px;font:400 16.5px/22px 'Liberation Sans',sans-serif;color:#fff;letter-spacing:-0.296px;text-decoration:underline;text-decoration-thickness:1.3px;text-underline-offset:1.2px;">Ivo Mihaylov</span><div class="a" style="left:952.4px;top:916px;width:88.2px;height:1px;background:#fff;opacity:.33"></div>
<span id="t47" class="t" style="left:1049.00px;top:897px;font:400 16.5px/22px 'Liberation Sans',sans-serif;color:#fff;letter-spacing:-0.061px;text-decoration:underline;text-decoration-thickness:1.3px;text-underline-offset:1.2px;">Log out</span><div class="a" style="left:1050.0px;top:916px;width:54.1px;height:1px;background:#fff;opacity:.33"></div>
<span id="t48" class="t" style="left:870.30px;top:929px;font:400 16.5px/22px 'Liberation Sans',sans-serif;color:#fff;letter-spacing:-0.201px;text-decoration:underline;text-decoration-thickness:1.3px;text-underline-offset:1.2px;">Data retention summary</span><div class="a" style="left:871.3px;top:948px;width:171.6px;height:1px;background:#fff;opacity:.33"></div>
<span id="t49" class="t" style="left:857.00px;top:961px;font:400 16.5px/22px 'Liberation Sans',sans-serif;color:#fff;letter-spacing:-0.293px;text-decoration:underline;text-decoration-thickness:1.3px;text-underline-offset:1.2px;">Reset user tour on this page</span><div class="a" style="left:858.0px;top:980px;width:198.2px;height:1px;background:#fff;opacity:.33"></div>

<div class="a" style="left:1853px;top:946px;width:32.2px;height:32.2px;border-radius:50%;background:#6c757d"></div>
<span id="t50" class="t" style="left:1864.40px;top:951px;font:700 19px/23px 'Liberation Sans',sans-serif;color:#212529;transform:scaleX(0.86);transform-origin:0 0;">?</span>


<!-- ===== Windows taskbar ===== -->
<div class="a" style="left:0;top:994px;width:1916px;height:47px;background:linear-gradient(90deg,#201e16 0%,#241f17 16%,#2a2118 29%,#39231a 38%,#34251a 47%,#32251a 68%,#30261a 87%,#33251a 100%)"></div>
<div class="a" style="left:0;top:994px;width:1916px;height:1px;background:#4b4238"></div>
<!-- start -->
<svg style="left:18px;top:1006.6px" width="24" height="24" viewBox="0 0 24 24"><defs><linearGradient id="wg" x1="0" y1="0" x2="1" y2="1"><stop offset="0" stop-color="#7fd8fb"/><stop offset="1" stop-color="#1295ef"/></linearGradient></defs><path d="M0 0.6 Q0 0 0.6 0 H11.2 V11.2 H0 Z M12.5 0 H22.6 Q23.2 0 23.2 0.6 V11.2 H12.5 Z M0 12.5 H11.2 V23.2 H0.6 Q0 23.2 0 22.6 Z M12.5 12.5 H23.2 V22.6 Q23.2 23.2 22.6 23.2 H12.5 Z" fill="url(#wg)"/></svg>
<!-- search -->
<svg style="left:61px;top:1005px" width="26" height="26" viewBox="0 0 26 26"><circle cx="11.4" cy="11.4" r="8.2" fill="#4a4840" stroke="#f2f2f2" stroke-width="2.5"/><path d="M17.6 17.8 L23 23.6" stroke="#d8d8d8" stroke-width="2.8" stroke-linecap="round"/></svg>
<!-- explorer -->
<svg style="left:105px;top:1005px" width="27" height="25" viewBox="0 0 27 25"><path d="M1 4 Q1 2.4 2.6 2.4 H9 L11.4 5 H1 Z" fill="#e8a21a"/><path d="M1 5 Q1 4.4 1.8 4.4 H23.4 Q25 4.4 25 6 V21.4 Q25 23 23.4 23 H2.6 Q1 23 1 21.4 Z" fill="#fcc740"/><path d="M1 5 H25 V8 H1 Z" fill="#fbd65f" opacity="0.7"/><path d="M6 16.4 Q6 15 7.4 15 H18.6 Q20 15 20 16.4 V23 H6 Z" fill="#1a83d8"/><rect x="8.6" y="18" width="8.8" height="2" rx="1" fill="#4aa3e8"/></svg>
<!-- firefox (active) -->
<div class="a" style="left:142px;top:998px;width:40px;height:39px;border-radius:5px;background:rgba(255,255,255,.075);border:1px solid rgba(255,255,255,.05);box-sizing:border-box"></div>
<svg style="left:149px;top:1004px" width="26" height="27" viewBox="0 0 26 27"><defs><radialGradient id="ffg" cx="0.62" cy="0.18" r="0.95"><stop offset="0" stop-color="#fff36a"/><stop offset="0.3" stop-color="#ffb52e"/><stop offset="0.6" stop-color="#ff5a36"/><stop offset="0.85" stop-color="#e5207a"/><stop offset="1" stop-color="#a52acb"/></radialGradient><radialGradient id="ffp" cx="0.5" cy="0.5" r="0.6"><stop offset="0" stop-color="#9059ff"/><stop offset="1" stop-color="#5a2ed1"/></radialGradient></defs><path d="M13 3.4 Q15.6 0.6 17.6 0.4 Q17.4 3 19.4 5 Q24.4 9 24.2 15.4 Q23.6 24.4 13 25.4 Q2.6 24.8 1.6 15.6 Q1.4 10 4.6 6.4 Q4.8 8.6 6.2 9.4 Q7.4 5.6 13 3.4 Z" fill="url(#ffg)"/><circle cx="13.4" cy="14.6" r="6" fill="url(#ffp)"/><path d="M5.4 9.6 Q9 7.6 12.6 9.6 Q15.6 10.2 16.4 12.4 Q13.6 11.4 12 13.4 Q10.6 15.6 7 14 Q5 12.6 5.4 9.6 Z" fill="#ff9a28"/></svg>
<div class="a" style="left:154px;top:1034px;width:16px;height:3px;border-radius:1.5px;background:#1c9bf2"></div>
<!-- cmd -->
<svg style="left:194px;top:1007px" width="23" height="20" viewBox="0 0 23 20"><rect x="0.4" y="0.8" width="22" height="18.4" fill="#050505" stroke="#7d7d7d" stroke-width="0.8"/><rect x="0.4" y="0.8" width="22" height="2.6" fill="#a9a9a9"/><path d="M3 8.4 H9 M11 9.6 H19" stroke="#dcdcdc" stroke-width="1.3"/><path d="M3 6.4 V9 M5.6 6.4 V9 M8 6 L9.6 9" stroke="#cfcfcf" stroke-width="0.8"/></svg>
<!-- outlook -->
<svg style="left:238px;top:1005px" width="24" height="25" viewBox="0 0 24 25"><rect x="11" y="6" width="12.4" height="12.4" fill="#fff" stroke="#1a73d0" stroke-width="1.2"/><path d="M11.6 6.8 L17.2 12 L22.8 6.8" fill="none" stroke="#1a73d0" stroke-width="1.3"/><path d="M0.6 3.4 L14 1 V24 L0.6 21.4 Z" fill="#0f6ac6"/><ellipse cx="7.4" cy="12.4" rx="3.2" ry="4.2" fill="none" stroke="#fff" stroke-width="2"/></svg>
<div class="a" style="left:247px;top:1034px;width:6px;height:3px;border-radius:1.5px;background:#9a9893"></div>
<!-- powershell -->
<svg style="left:281px;top:1008px" width="26" height="20" viewBox="0 0 26 20"><path d="M6.4 0.8 H24.6 L19.4 18.8 H1.2 Z" fill="#3c74dc"/><path d="M8.4 4.6 L14 9.6 L7.2 14.8" fill="none" stroke="#fff" stroke-width="2.1" stroke-linecap="round" stroke-linejoin="round"/><path d="M13 15 H18.4" stroke="#fff" stroke-width="2" stroke-linecap="round"/></svg>
<!-- rdp -->
<svg style="left:326px;top:1005px" width="26" height="26" viewBox="0 0 26 26"><path d="M2 1.6 L19.6 3.4 V16.8 L2 15.6 Z" fill="#cfd3da"/><path d="M3.4 3.2 L18.4 4.6 V15.4 L3.4 14.4 Z" fill="#0c2fd6"/><path d="M3.4 3.2 L10 3.8 L6 14.6 L3.4 14.4 Z" fill="#3b78f2"/><path d="M12 5 L18.4 5.6 V12 Z" fill="#6fa6ff" opacity="0.8"/><path d="M8 16 H13.6 L14.4 20 H7.2 Z" fill="#9aa0a8"/><ellipse cx="11" cy="21.4" rx="6.6" ry="2.4" fill="#c4c8ce"/><circle cx="19.4" cy="19.4" r="5.4" fill="#d9dcd6" stroke="#f2f2f2" stroke-width="0.8"/><path d="M15.8 17 L18.4 19.4 L15.8 21.8 M23 17 L20.4 19.4 L23 21.8" fill="none" stroke="#2f8a2f" stroke-width="1.6"/></svg>
<!-- scanner -->
<svg style="left:369px;top:1007px" width="26" height="18" viewBox="0 0 26 18"><path d="M1 8.6 L14 2.4 L25 5.4 V9.6 L12.6 16.4 L1 12.6 Z" fill="#d9cf86"/><path d="M1 8.6 L14 2.4 L25 5.4 L12.6 11.6 Z" fill="#f1e8a4"/><path d="M6.4 7 L14.6 3.2 L21 4.8 L12.8 8.8 Z" fill="#d8a91e"/><path d="M12.6 11.6 V16.4 L25 9.6 V5.4 Z" fill="#b5ab66"/><path d="M15.6 12.4 L22.4 8.6" stroke="#6c6a44" stroke-width="1.4"/><path d="M14 1.4 L22 3.4 L20.6 4.2 L13 2.4 Z" fill="#fff9d0"/></svg>
<!-- word -->
<svg style="left:414px;top:1005px" width="24" height="25" viewBox="0 0 24 25"><rect x="11" y="3.8" width="12.4" height="17.4" fill="#fff" stroke="#2b579a" stroke-width="1"/><path d="M13.4 7 H21.6 M13.4 9.4 H21.6 M13.4 11.8 H21.6 M13.4 14.2 H21.6 M13.4 16.6 H21.6 M13.4 19 H21.6" stroke="#2b579a" stroke-width="1.1"/><path d="M0.6 3.4 L14 1 V24 L0.6 21.4 Z" fill="#2b579a"/><path d="M2.8 8.6 L4.6 16.4 L6.8 9.6 L9 16.4 L10.8 8.6" fill="none" stroke="#fff" stroke-width="1.6" stroke-linejoin="round"/></svg>
<div class="a" style="left:423px;top:1034px;width:6px;height:3px;border-radius:1.5px;background:#9a9893"></div>
<!-- capcut -->
<svg style="left:459px;top:1007px" width="22" height="22" viewBox="0 0 22 22"><rect x="0" y="0" width="22" height="22" rx="5" fill="#fff"/><path d="M5 6 H15 L17.6 7.6 L5 14.4 L5 16 H15 L17.6 14.4 L5 7.6 Z" fill="none" stroke="#000" stroke-width="2" stroke-linejoin="round"/></svg>
<div class="a" style="left:467px;top:1034px;width:6px;height:3px;border-radius:1.5px;background:#9a9893"></div>
<!-- snipping tool -->
<svg style="left:502px;top:1005px" width="26" height="27" viewBox="0 0 26 27"><rect x="0.6" y="0.8" width="17.8" height="17.8" rx="2.4" fill="#f4f4f4"/><rect x="3.4" y="3.6" width="12" height="12" fill="none" stroke="#d9281e" stroke-width="2.4" stroke-dasharray="2.6 1.2"/><path d="M5 15.6 H14.4 V6 H17.8 V18.6 H5 Z" fill="#c9cdd2"/><path d="M14 9 L17 20 M19 16.6 L13 19" stroke="#9aa1a8" stroke-width="1.6"/><circle cx="22.4" cy="14.4" r="2.2" fill="none" stroke="#1d9bf0" stroke-width="1.5"/><circle cx="15.6" cy="23" r="2.2" fill="none" stroke="#1d9bf0" stroke-width="1.5"/></svg>
<div class="a" style="left:511px;top:1034px;width:6px;height:3px;border-radius:1.5px;background:#9a9893"></div>
<!-- tray -->
<svg style="left:1666.6px;top:1013.4px" width="13" height="9" viewBox="0 0 13 9"><path d="M1.5 7 L6.4 1.8 L11.3 7" fill="none" stroke="#fff" stroke-width="1.5" stroke-linecap="round" stroke-linejoin="round"/></svg>
<svg style="left:1696px;top:1009px" width="19" height="19" viewBox="0 0 19 19"><path d="M1.8 9.6 A7 7 0 0 1 14.6 4.6 M15.8 8.6 A7 7 0 0 1 3.4 14.2" fill="none" stroke="#fff" stroke-width="1.1"/><path d="M15 1.6 V5 H11.6 M2.8 17 V13.8 H6.2" fill="none" stroke="#fff" stroke-width="1.1"/><circle cx="12.9" cy="13" r="3.8" fill="#ff9e0c"/></svg>

<span id="t51" class="t" style="left:1731.50px;top:1003px;font:400 11.6px/16px 'Liberation Sans',sans-serif;color:#fff;letter-spacing:-1.053px;-webkit-text-stroke:0.2px #fff;">ENG</span>
<span id="t52" class="t" style="left:1735.50px;top:1018px;font:400 11.6px/16px 'Liberation Sans',sans-serif;color:#fff;letter-spacing:-1.673px;-webkit-text-stroke:0.2px #fff;">US</span>

<svg style="left:1772px;top:1009px" width="18" height="18" viewBox="0 0 18 18"><path d="M1.7 1.9 H12 V13.2 H1.7 Z M4 16.3 H11.6 M6 13.2 V16.3 M8.6 13.2 V16.3" fill="none" stroke="#fff" stroke-width="1"/><path d="M12.9 1.5 H16.4 V7.4 H12.9 Z" fill="#33251a" stroke="#fff" stroke-width="0.9"/><path d="M14.9 7.4 V16.6" stroke="#fff" stroke-width="1"/><path d="M14 2.8 H15.4" stroke="#fff" stroke-width="0.7"/></svg>
<svg style="left:1796px;top:1010px" width="19" height="16" viewBox="0 0 19 16"><path d="M1 5.6 H4 L8 2 V14 L4 10.4 H1 Z" fill="none" stroke="#fff" stroke-width="1.1" stroke-linejoin="round"/><path d="M10.4 5.4 Q12 8 10.4 10.6 M12.6 3.6 Q15.4 8 12.6 12.4 M14.8 1.8 Q18.6 8 14.8 14.2" fill="none" stroke="#fff" stroke-width="1.1" stroke-linecap="round"/></svg>

<span id="t53" class="t" style="left:1869.80px;top:1002px;font:400 11.5px/16px 'Liberation Sans',sans-serif;color:#fff;letter-spacing:-0.371px;">16:34</span>
<span id="t54" class="t" style="left:1829.60px;top:1018px;font:400 11.5px/16px 'Liberation Sans',sans-serif;color:#fff;letter-spacing:0.130px;">15.10.2025 г.</span>
</body></html>
